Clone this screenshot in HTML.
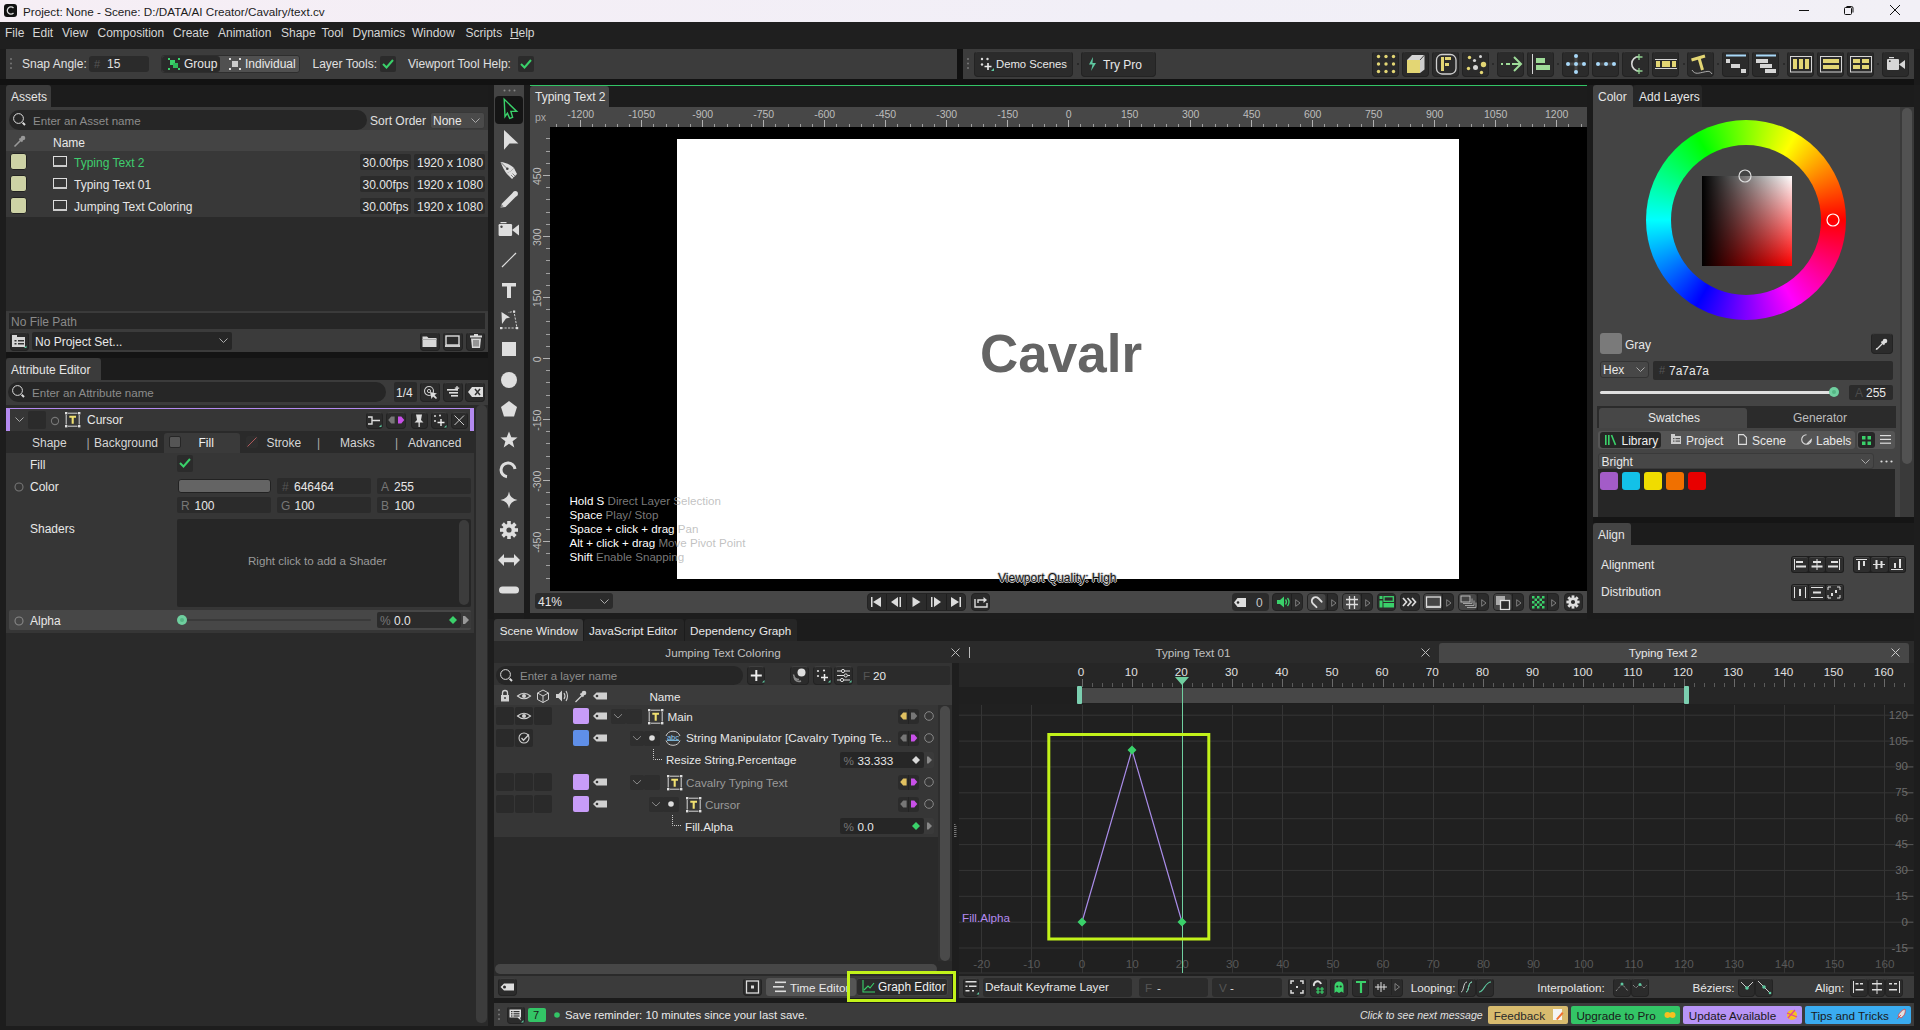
<!DOCTYPE html>
<html><head><meta charset="utf-8">
<style>
*{box-sizing:border-box;margin:0;padding:0}
html,body{width:1920px;height:1030px;overflow:hidden;background:#1d1d1d;font-family:"Liberation Sans",sans-serif;font-size:12px;color:#dcdcdc}
.a{position:absolute}
.t{position:absolute;white-space:nowrap;line-height:1}
svg{position:absolute;overflow:visible}
.btn{background:#2b2b2b;border:1px solid #232323;border-top-color:#3f3f3f;border-radius:4px}
</style></head><body>
<!-- ===== TITLE BAR ===== -->
<div class="a" style="left:0;top:0;width:1920px;height:22px;background:linear-gradient(90deg,#f6eef5,#f1eff7 60%,#f2f0f6)"></div>
<div class="a" style="left:4px;top:4px;width:13px;height:13px;background:#111;border-radius:3px"></div>
<svg style="left:4px;top:4px" width="13" height="13"><path d="M9.5 4 A3.6 3.6 0 1 0 9.5 9" fill="none" stroke="#ddd" stroke-width="1.3"/></svg>
<div class="t" style="left:23px;top:6px;color:#1b1b1b;font-size:11.7px">Project: None - Scene: D:/DATA/AI Creator/Cavalry/text.cv</div>
<svg style="left:1799px;top:10px" width="10" height="1"><rect width="10" height="1" fill="#111"/></svg>
<svg style="left:1844px;top:5px" width="10" height="10"><rect x="0.5" y="2.5" width="7" height="7" rx="1" fill="none" stroke="#111"/><path d="M2.5 1.5 H7.5 a1.5 1.5 0 0 1 1.5 1.5 V7.5" fill="none" stroke="#111"/></svg>
<svg style="left:1890px;top:5px" width="10" height="10"><path d="M0 0 L10 10 M10 0 L0 10" stroke="#111" stroke-width="1"/></svg>

<!-- ===== MENU BAR ===== -->
<div class="a" style="left:0;top:22px;width:1920px;height:27px;background:#1f1f1f"></div>
<div class="t" style="left:5px;top:26.5px;color:#d6d6d6">File</div>
<div class="t" style="left:32.5px;top:26.5px;color:#d6d6d6">Edit</div>
<div class="t" style="left:62px;top:26.5px;color:#d6d6d6">View</div>
<div class="t" style="left:97.5px;top:26.5px;color:#d6d6d6">Composition</div>
<div class="t" style="left:173px;top:26.5px;color:#d6d6d6">Create</div>
<div class="t" style="left:218px;top:26.5px;color:#d6d6d6">Animation</div>
<div class="t" style="left:281px;top:26.5px;color:#d6d6d6">Shape</div>
<div class="t" style="left:321.5px;top:26.5px;color:#d6d6d6">Tool</div>
<div class="t" style="left:352.5px;top:26.5px;color:#d6d6d6">Dynamics</div>
<div class="t" style="left:412px;top:26.5px;color:#d6d6d6">Window</div>
<div class="t" style="left:465.5px;top:26.5px;color:#d6d6d6">Scripts</div>
<div class="t" style="left:510px;top:26.5px;color:#d6d6d6;text-decoration:underline">H</div>
<div class="t" style="left:518.5px;top:26.5px;color:#d6d6d6">elp</div>

<!-- ===== TOOLBAR ===== -->
<div class="a" style="left:0;top:49px;width:1920px;height:36px;background:#1b1b1b"></div>
<div class="a" style="left:6px;top:49px;width:951px;height:30px;background:#3c3c3c"></div>
<div class="a" style="left:963px;top:49px;width:951px;height:30px;background:#3c3c3c"></div>
<div class="a" style="left:0;top:79px;width:1914px;height:6px;background:#121212"></div>
<div class="a" style="left:957px;top:49px;width:6px;height:30px;background:#111"></div>
<svg style="left:10px;top:58px" width="3" height="12"><circle cx="1" cy="1" r="1" fill="#777"/><circle cx="1" cy="5.5" r="1" fill="#777"/><circle cx="1" cy="10" r="1" fill="#777"/></svg>
<div class="t" style="left:22px;top:58px;color:#e0e0e0">Snap Angle:</div>
<div class="a" style="left:89px;top:56px;width:60px;height:16px;background:#2b2b2b;border-radius:3px"></div>
<div class="t" style="left:94px;top:58.5px;color:#555;font-size:11px">#</div>
<div class="t" style="left:107px;top:58px;color:#e0e0e0">15</div>
<div class="a" style="left:161px;top:55px;width:139px;height:18px;background:#505050;border-radius:3px;border:1px solid #2e2e2e"></div>
<div class="a" style="left:162px;top:56px;width:58px;height:16px;background:#2a2a2a;border-radius:3px"></div>
<svg style="left:168px;top:58px" width="12" height="12"><rect x="0" y="0" width="2" height="2" fill="#3ad16a"/><rect x="10" y="0" width="2" height="2" fill="#3ad16a"/><rect x="0" y="10" width="2" height="2" fill="#3ad16a"/><rect x="10" y="10" width="2" height="2" fill="#3ad16a"/><rect x="2" y="2" width="5" height="5" fill="#3ad16a"/><rect x="5" y="5" width="5" height="5" fill="#2fb85a"/></svg>
<div class="t" style="left:184px;top:58px;color:#e8e8e8">Group</div>
<svg style="left:229px;top:58px" width="12" height="12"><rect x="0" y="0" width="2" height="2" fill="#ddd"/><rect x="10" y="0" width="2" height="2" fill="#ddd"/><rect x="0" y="10" width="2" height="2" fill="#ddd"/><rect x="10" y="10" width="2" height="2" fill="#ddd"/><rect x="3" y="3" width="6" height="6" fill="#ccc"/></svg>
<div class="t" style="left:245px;top:58px;color:#e8e8e8">Individual</div>
<div class="t" style="left:312.5px;top:58px;color:#e0e0e0">Layer Tools:</div>
<div class="a" style="left:380px;top:56px;width:16px;height:16px;background:#2b2b2b;border-radius:2px"></div>
<svg style="left:382px;top:59px" width="12" height="10"><path d="M1 5 L4.5 8.5 L11 1" fill="none" stroke="#3ad16a" stroke-width="2"/></svg>
<div class="t" style="left:408px;top:58px;color:#e0e0e0">Viewport Tool Help:</div>
<div class="a" style="left:518px;top:56px;width:16px;height:16px;background:#2b2b2b;border-radius:2px"></div>
<svg style="left:520px;top:59px" width="12" height="10"><path d="M1 5 L4.5 8.5 L11 1" fill="none" stroke="#3ad16a" stroke-width="2"/></svg>

<svg style="left:967px;top:58px" width="3" height="12"><circle cx="1" cy="1" r="1" fill="#777"/><circle cx="1" cy="5.5" r="1" fill="#777"/><circle cx="1" cy="10" r="1" fill="#777"/></svg>
<div class="a btn" style="left:974px;top:51px;width:99px;height:26px"></div>
<svg style="left:980px;top:57px" width="14" height="14"><circle cx="2" cy="2" r="1.2" fill="#ddd"/><circle cx="7.5" cy="2" r="1.2" fill="#ddd"/><circle cx="2" cy="7.5" r="1.2" fill="#ddd"/><path d="M8 6 V13 M4.5 9.5 H11.5" stroke="#eee" stroke-width="1.6"/><path d="M11 14 L14 11 V14Z" fill="#5ec8a0"/></svg>
<div class="t" style="left:996px;top:59px;color:#e8e8e8;font-size:11.3px">Demo Scenes</div>
<svg style="left:1077px;top:63px" width="2" height="2"><circle cx="1" cy="1" r="1" fill="#222"/></svg>
<div class="a btn" style="left:1081px;top:51px;width:75px;height:26px"></div>
<svg style="left:1088px;top:57px" width="9" height="14"><path d="M5 0 L1 7.5 H4.5 L3 14 L8 6 H4.5 Z" fill="#5ec8a0"/></svg>
<div class="t" style="left:1103px;top:59px;color:#e8e8e8">Try Pro</div>
<div class="a btn" style="left:1372.0px;top:51px;width:27px;height:26px"></div><svg style="left:1372.0px;top:51px" width="27" height="26" viewBox="1372.0 51 27 26"><circle cx="1378.5" cy="56.5" r="1.7" fill="#e3d674"/><circle cx="1378.5" cy="64" r="1.7" fill="#e3d674"/><circle cx="1378.5" cy="71.5" r="1.7" fill="#e3d674"/><circle cx="1386" cy="56.5" r="1.7" fill="#e3d674"/><circle cx="1386" cy="64" r="1.7" fill="#e3d674"/><circle cx="1386" cy="71.5" r="1.7" fill="#e3d674"/><circle cx="1393.5" cy="56.5" r="1.7" fill="#e3d674"/><circle cx="1393.5" cy="64" r="1.7" fill="#e3d674"/><circle cx="1393.5" cy="71.5" r="1.7" fill="#e3d674"/></svg>
<div class="a btn" style="left:1402.0px;top:51px;width:27px;height:26px"></div><svg style="left:1402.0px;top:51px" width="27" height="26" viewBox="1402.0 51 27 26"><rect x="1407" y="60" width="13" height="13" fill="#e3d674"/><path d="M1407 60 L1412 55 H1424.5 L1420 60Z" fill="#d6d6d6"/><path d="M1420 60 L1424.5 55 V69.5 L1420 73Z" fill="#cfcfcf"/><path d="M1420 60 L1424.5 55" stroke="#333" stroke-width="0.8"/></svg>
<div class="a btn" style="left:1432.0px;top:51px;width:27px;height:26px"></div><svg style="left:1432.0px;top:51px" width="27" height="26" viewBox="1432.0 51 27 26"><rect x="1436.5" y="54.5" width="19.5" height="19.5" rx="5.5" fill="none" stroke="#cfcfcf" stroke-width="1.3"/><rect x="1441" y="57" width="3" height="14" fill="#e3d674"/><rect x="1445" y="57" width="6" height="3" fill="#e3d674"/><rect x="1445" y="63" width="4" height="3" fill="#e3d674"/></svg>
<div class="a btn" style="left:1462.0px;top:51px;width:27px;height:26px"></div><svg style="left:1462.0px;top:51px" width="27" height="26" viewBox="1462.0 51 27 26"><circle cx="1469.5" cy="57.5" r="1.7" fill="#e3d674"/><circle cx="1480.5" cy="56.5" r="1.5" fill="#d6d6d6"/><circle cx="1474.5" cy="60.5" r="1.6" fill="#d6d6d6"/><circle cx="1483.5" cy="64.5" r="2.7" fill="#e3d674"/><circle cx="1475.5" cy="67.5" r="2.5" fill="#d6d6d6"/><circle cx="1468.5" cy="68.5" r="1.7" fill="#e3d674"/><circle cx="1481.5" cy="72.5" r="1.7" fill="#e3d674"/></svg>
<div class="a btn" style="left:1497.0px;top:51px;width:27px;height:26px"></div><svg style="left:1497.0px;top:51px" width="27" height="26" viewBox="1497.0 51 27 26"><rect x="1501" y="63" width="2" height="2" fill="#9edb98"/><rect x="1506" y="63" width="4" height="2" fill="#9edb98"/><rect x="1512" y="63" width="9" height="2" fill="#9edb98"/><path d="M1514 57 L1521 64 L1514 71" fill="none" stroke="#9edb98" stroke-width="2"/></svg>
<div class="a btn" style="left:1527.0px;top:51px;width:27px;height:26px"></div><svg style="left:1527.0px;top:51px" width="27" height="26" viewBox="1527.0 51 27 26"><rect x="1532" y="54" width="1" height="20" fill="#d6d6d6"/><rect x="1536" y="58" width="9" height="5" fill="#9edb98"/><rect x="1536" y="65" width="14" height="5" fill="#9edb98"/></svg>
<div class="a btn" style="left:1562.0px;top:51px;width:27px;height:26px"></div><svg style="left:1562.0px;top:51px" width="27" height="26" viewBox="1562.0 51 27 26"><path d="M1576 56 V72 M1568 64 H1584" stroke="#4a4a4a" stroke-width="3"/><circle cx="1576" cy="56" r="2" fill="#a8d8f8"/><circle cx="1568" cy="64" r="2" fill="#a8d8f8"/><circle cx="1576" cy="64" r="2" fill="#a8d8f8"/><circle cx="1584" cy="64" r="2" fill="#a8d8f8"/><circle cx="1576" cy="72" r="2" fill="#a8d8f8"/></svg>
<div class="a btn" style="left:1592.0px;top:51px;width:27px;height:26px"></div><svg style="left:1592.0px;top:51px" width="27" height="26" viewBox="1592.0 51 27 26"><path d="M1598 64 H1614" stroke="#4a4a4a" stroke-width="3"/><circle cx="1598" cy="64" r="2" fill="#a8d8f8"/><circle cx="1606" cy="64" r="2" fill="#a8d8f8"/><circle cx="1614" cy="64" r="2" fill="#a8d8f8"/></svg>
<div class="a btn" style="left:1622.0px;top:51px;width:27px;height:26px"></div><svg style="left:1622.0px;top:51px" width="27" height="26" viewBox="1622.0 51 27 26"><path d="M1639 56.5 A7.2 7.2 0 0 0 1639 71" fill="none" stroke="#d6d6d6" stroke-width="1.6"/><path d="M1639 54 V60 M1636.5 57 H1642.5 M1639 68 V74 M1636.5 71 H1642.5" stroke="#8fcf8f" stroke-width="1.3"/></svg>
<div class="a btn" style="left:1652.0px;top:51px;width:27px;height:26px"></div><svg style="left:1652.0px;top:51px" width="27" height="26" viewBox="1652.0 51 27 26"><rect x="1655" y="59" width="22" height="1" fill="#d6d6d6"/><rect x="1655" y="68" width="22" height="1" fill="#d6d6d6"/><rect x="1656" y="61" width="4" height="6" fill="#e3d674"/><rect x="1662" y="61" width="8" height="6" fill="#e3d674"/><rect x="1672" y="61" width="4" height="6" fill="#e3d674"/></svg>
<div class="a btn" style="left:1687.0px;top:51px;width:27px;height:26px"></div><svg style="left:1687.0px;top:51px" width="27" height="26" viewBox="1687.0 51 27 26"><path d="M1691.5 60 L1705 56" stroke="#e3d674" stroke-width="3"/><path d="M1699 58 L1702.5 70" stroke="#e3d674" stroke-width="3"/><path d="M1692 70 C1695 75 1699 73 1704 72 S1710 71 1712 74" fill="none" stroke="#bbb" stroke-width="0.9"/></svg>
<div class="a btn" style="left:1722.0px;top:51px;width:27px;height:26px"></div><svg style="left:1722.0px;top:51px" width="27" height="26" viewBox="1722.0 51 27 26"><rect x="1726" y="54.5" width="20" height="2" fill="#a8d8f8"/><rect x="1726" y="59" width="4" height="4" fill="#d6d6d6"/><rect x="1731" y="64" width="9" height="4" fill="#d6d6d6"/><rect x="1741" y="69" width="5" height="4" fill="#d6d6d6"/></svg>
<div class="a btn" style="left:1752.0px;top:51px;width:27px;height:26px"></div><svg style="left:1752.0px;top:51px" width="27" height="26" viewBox="1752.0 51 27 26"><rect x="1756" y="54.5" width="20" height="2" fill="#a8d8f8"/><rect x="1756" y="59" width="12" height="4" fill="#d6d6d6"/><rect x="1760" y="64" width="12" height="4" fill="#d6d6d6"/><rect x="1765" y="69" width="11" height="4" fill="#d6d6d6"/></svg>
<div class="a btn" style="left:1787.0px;top:51px;width:27px;height:26px"></div><svg style="left:1787.0px;top:51px" width="27" height="26" viewBox="1787.0 51 27 26"><rect x="1790.5" y="56.5" width="21" height="15.5" fill="none" stroke="#d6d6d6" stroke-width="1"/><rect x="1793" y="59" width="4" height="10" fill="#e3d674"/><rect x="1799" y="59" width="4" height="10" fill="#e3d674"/><rect x="1805" y="59" width="4" height="10" fill="#e3d674"/></svg>
<div class="a btn" style="left:1817.0px;top:51px;width:27px;height:26px"></div><svg style="left:1817.0px;top:51px" width="27" height="26" viewBox="1817.0 51 27 26"><rect x="1820.5" y="56.5" width="21" height="15.5" fill="none" stroke="#d6d6d6" stroke-width="1"/><rect x="1823" y="59" width="16" height="4" fill="#e3d674"/><rect x="1823" y="65" width="16" height="4" fill="#e3d674"/></svg>
<div class="a btn" style="left:1847.0px;top:51px;width:27px;height:26px"></div><svg style="left:1847.0px;top:51px" width="27" height="26" viewBox="1847.0 51 27 26"><rect x="1850.5" y="56.5" width="21" height="15.5" fill="none" stroke="#d6d6d6" stroke-width="1"/><rect x="1853" y="59" width="7" height="4" fill="#e3d674"/><rect x="1862" y="59" width="7" height="4" fill="#e3d674"/><rect x="1853" y="65" width="7" height="4" fill="#e3d674"/><rect x="1862" y="65" width="7" height="4" fill="#e3d674"/></svg>
<div class="a btn" style="left:1882.0px;top:51px;width:27px;height:26px"></div><svg style="left:1882.0px;top:51px" width="27" height="26" viewBox="1882.0 51 27 26"><rect x="1887" y="59" width="12" height="11" rx="1" fill="#d6d6d6"/><path d="M1899 64.5 L1905 60 V69Z" fill="#d6d6d6"/><rect x="1889" y="57" width="5" height="1.2" fill="#d6d6d6"/><circle cx="1889.8" cy="61.2" r="0.9" fill="#333"/></svg><svg style="left:1492px;top:63px" width="2" height="2"><circle cx="1" cy="1" r="1" fill="#252525"/></svg><svg style="left:1557px;top:63px" width="2" height="2"><circle cx="1" cy="1" r="1" fill="#252525"/></svg><svg style="left:1682.5px;top:63px" width="2" height="2"><circle cx="1" cy="1" r="1" fill="#252525"/></svg><svg style="left:1717px;top:63px" width="2" height="2"><circle cx="1" cy="1" r="1" fill="#252525"/></svg><svg style="left:1782.5px;top:63px" width="2" height="2"><circle cx="1" cy="1" r="1" fill="#252525"/></svg><svg style="left:1877px;top:63px" width="2" height="2"><circle cx="1" cy="1" r="1" fill="#252525"/></svg><!-- ===== LEFT PANEL: ASSETS ===== -->
<div class="a" style="left:0;top:85px;width:6px;height:945px;background:#1d1d1d"></div>
<div class="a" style="left:6px;top:85px;width:482px;height:22px;background:#1c1c1c"></div>
<div class="a" style="left:6px;top:85px;width:45px;height:22px;background:#3b3b3b;border-radius:3px 3px 0 0"></div>
<div class="t" style="left:11px;top:91px;color:#e6e6e6">Assets</div>
<div class="a" style="left:6px;top:107px;width:482px;height:44px;background:#3b3b3b"></div>
<div class="a" style="left:6px;top:130px;width:482px;height:21px;background:#444"></div>
<div class="a" style="left:9px;top:110px;width:358px;height:20px;background:#262626;border-radius:10px"></div>
<svg style="left:13px;top:113px" width="14" height="14"><circle cx="5.5" cy="5.5" r="4.9" fill="none" stroke="#ddd" stroke-width="1"/><path d="M9.6 9.6 L12 12" stroke="#ddd" stroke-width="2"/></svg>
<div class="t" style="left:33px;top:115px;color:#8c8c8c;font-size:11.6px">Enter an Asset name</div>
<div class="t" style="left:370px;top:115px;color:#e0e0e0">Sort Order</div>
<div class="a" style="left:430px;top:111.5px;width:55px;height:17px;background:#4a4a4a;border:1px solid #383838;border-radius:3px"></div>
<div class="t" style="left:433px;top:115px;color:#e8e8e8">None</div>
<svg style="left:471px;top:118px" width="9" height="5"><path d="M0.5 0.5 L4.5 4.5 L8.5 0.5" fill="none" stroke="#aaa" stroke-width="1"/></svg>
<svg style="left:13px;top:134px" width="14" height="14"><path d="M1.5 12.5 L8 6" stroke="#999" stroke-width="1.6" fill="none"/><path d="M6.5 4.5 L9.5 7.5" stroke="#999" stroke-width="1.8"/><circle cx="10" cy="4" r="2.3" fill="#999"/><path d="M8 6 L10 4" stroke="#999" stroke-width="2.5"/></svg>
<div class="t" style="left:53px;top:137px;color:#e8e8e8">Name</div>
<div class="a" style="left:6px;top:151px;width:482px;height:66px;background:#383838"></div>
<div class="a" style="left:6px;top:217px;width:482px;height:95px;background:#2a2a2a"></div>

<div class="a" style="left:9.5px;top:153px;width:17px;height:17px;background:#cdd2a5;border-radius:3px;border:1px solid #222"></div>
<div class="a" style="left:9.5px;top:175px;width:17px;height:17px;background:#cdd2a5;border-radius:3px;border:1px solid #222"></div>
<div class="a" style="left:9.5px;top:197px;width:17px;height:17px;background:#cdd2a5;border-radius:3px;border:1px solid #222"></div>
<svg style="left:53px;top:156px" width="15" height="12"><rect x="0.5" y="0.5" width="13" height="9" fill="none" stroke="#ddd"/><rect x="0" y="9" width="14" height="2" fill="#ccc"/></svg>
<svg style="left:53px;top:178px" width="15" height="12"><rect x="0.5" y="0.5" width="13" height="9" fill="none" stroke="#ddd"/><rect x="0" y="9" width="14" height="2" fill="#ccc"/></svg>
<svg style="left:53px;top:200px" width="15" height="12"><rect x="0.5" y="0.5" width="13" height="9" fill="none" stroke="#ddd"/><rect x="0" y="9" width="14" height="2" fill="#ccc"/></svg>
<div class="t" style="left:74px;top:157px;color:#3fce6e">Typing Text 2</div>
<div class="t" style="left:74px;top:179px;color:#e6e6e6">Typing Text 01</div>
<div class="t" style="left:74px;top:201px;color:#e6e6e6">Jumping Text Coloring</div>
<div class="a" style="left:360px;top:154px;width:51px;height:16px;background:#2b2b2b;border-radius:2px"></div>
<div class="a" style="left:414px;top:154px;width:71px;height:16px;background:#2b2b2b;border-radius:2px"></div>
<div class="a" style="left:360px;top:176px;width:51px;height:16px;background:#2b2b2b;border-radius:2px"></div>
<div class="a" style="left:414px;top:176px;width:71px;height:16px;background:#2b2b2b;border-radius:2px"></div>
<div class="a" style="left:360px;top:198px;width:51px;height:16px;background:#2b2b2b;border-radius:2px"></div>
<div class="a" style="left:414px;top:198px;width:71px;height:16px;background:#2b2b2b;border-radius:2px"></div>
<div class="t" style="left:362.5px;top:157px;color:#e6e6e6">30.00fps</div>
<div class="t" style="left:417px;top:157px;color:#e6e6e6">1920 x 1080</div>
<div class="t" style="left:362.5px;top:179px;color:#e6e6e6">30.00fps</div>
<div class="t" style="left:417px;top:179px;color:#e6e6e6">1920 x 1080</div>
<div class="t" style="left:362.5px;top:201px;color:#e6e6e6">30.00fps</div>
<div class="t" style="left:417px;top:201px;color:#e6e6e6">1920 x 1080</div>

<!-- file path / project -->
<div class="a" style="left:6px;top:311px;width:482px;height:1px;background:#3a3a3a"></div>
<div class="a" style="left:6px;top:312px;width:482px;height:40px;background:#3b3b3b"></div>
<div class="a" style="left:9px;top:312.5px;width:476px;height:16.5px;background:#262626"></div>
<div class="t" style="left:11px;top:315.5px;color:#8a8a8a">No File Path</div>
<div class="a btn" style="left:9.5px;top:332px;width:19px;height:19px"></div>
<svg style="left:12px;top:335px" width="15" height="14"><rect x="0" y="2" width="13" height="10" fill="#d6d6d6"/><rect x="0" y="0" width="5" height="2" fill="#d6d6d6"/><rect x="2.5" y="5" width="2" height="1.5" fill="#333"/><rect x="6" y="5" width="6" height="1.5" fill="#333"/><rect x="2.5" y="8" width="2" height="1.5" fill="#333"/><rect x="6" y="8" width="6" height="1.5" fill="#333"/><path d="M12 13 L14.5 10.5 V13Z" fill="#5ec8a0"/></svg>
<div class="a" style="left:32px;top:332px;width:200px;height:18px;background:#262626;border-radius:2px"></div>
<div class="t" style="left:35px;top:335.5px;color:#e8e8e8">No Project Set...</div>
<svg style="left:219px;top:338px" width="9" height="5"><path d="M0.5 0.5 L4.5 4.5 L8.5 0.5" fill="none" stroke="#aaa" stroke-width="1"/></svg>
<div class="a btn" style="left:420px;top:332px;width:20px;height:19px"></div>
<div class="a btn" style="left:443px;top:332px;width:20px;height:19px"></div>
<div class="a btn" style="left:466px;top:332px;width:19px;height:19px"></div>
<svg style="left:422px;top:335px" width="16" height="13"><path d="M0.5 1.5 H5 L6.5 3 H14.5 V12 H0.5Z" fill="#d8d8d8"/><rect x="0.5" y="4" width="14" height="1" fill="#aaa"/></svg>
<svg style="left:445px;top:335px" width="16" height="13"><rect x="1" y="1" width="13" height="9" fill="none" stroke="#ddd" stroke-width="1.4"/><rect x="0" y="10" width="15" height="2" fill="#ccc"/></svg>
<svg style="left:469px;top:334px" width="14" height="15"><rect x="1" y="1.5" width="12" height="2" fill="#d8d8d8"/><rect x="5" y="0" width="4" height="2" fill="#d8d8d8"/><path d="M2 4.5 H12 L11 14 H3Z" fill="#d8d8d8"/><path d="M5 6 V12.5 M7 6 V12.5 M9 6 V12.5" stroke="#444" stroke-width="0.9"/></svg>
<div class="a" style="left:6px;top:352px;width:482px;height:6px;background:#141414"></div>

<!-- ===== ATTRIBUTE EDITOR ===== -->
<div class="a" style="left:6px;top:358px;width:482px;height:22px;background:#1c1c1c"></div>
<div class="a" style="left:6px;top:358px;width:95px;height:22px;background:#3b3b3b;border-radius:3px 3px 0 0"></div>
<div class="t" style="left:11px;top:364px;color:#e6e6e6">Attribute Editor</div>
<div class="a" style="left:6px;top:380px;width:482px;height:28px;background:#3b3b3b"></div>
<div class="a" style="left:8px;top:382px;width:378px;height:20px;background:#262626;border-radius:10px"></div>
<svg style="left:12px;top:385px" width="14" height="14"><circle cx="5.5" cy="5.5" r="4.9" fill="none" stroke="#ddd" stroke-width="1"/><path d="M9.6 9.6 L12 12" stroke="#ddd" stroke-width="2"/></svg>
<div class="t" style="left:32px;top:387px;color:#8c8c8c;font-size:11.6px">Enter an Attribute name</div>
<div class="a" style="left:394px;top:382px;width:23px;height:20px;background:#2a2a2a;border-radius:2px"></div>
<div class="t" style="left:396px;top:387px;color:#e6e6e6">1/4</div>
<div class="a btn" style="left:420px;top:382px;width:20px;height:20px"></div>
<div class="a btn" style="left:443px;top:382px;width:20px;height:20px"></div>
<div class="a btn" style="left:465px;top:382px;width:20px;height:20px"></div>
<svg style="left:423px;top:385px" width="15" height="15"><circle cx="6" cy="6" r="4.5" fill="none" stroke="#ccc" stroke-width="1.1"/><circle cx="6" cy="6" r="1.6" fill="none" stroke="#ccc"/><path d="M7 7 L8.5 14 L10 11.5 L13 14 L14 13 L11.5 10 L14 8.5Z" fill="#ddd"/></svg>
<svg style="left:446px;top:386px" width="15" height="13"><rect x="1" y="3" width="11" height="1.6" fill="#ddd"/><rect x="3" y="6" width="9" height="1.6" fill="#ddd"/><rect x="5" y="9" width="7" height="1.6" fill="#ddd"/><path d="M11 0 V4.5 M8.8 2.2 H13.2" stroke="#ddd" stroke-width="1.2"/></svg>
<svg style="left:468px;top:387px" width="15" height="10"><path d="M4 0 H15 V10 H4 L0 5Z" fill="#ddd"/><path d="M7 2 L12 8 M12 2 L7 8" stroke="#333" stroke-width="1.5"/></svg>

<div class="a" style="left:6px;top:405px;width:482px;height:620.5px;background:#2a2a2a"></div>
<div class="a" style="left:6px;top:408px;width:468px;height:23px;background:#363636;border-top:1px solid #b48af0"></div>
<div class="a" style="left:6px;top:408px;width:4px;height:23px;background:#b48af0"></div>
<div class="a" style="left:470px;top:408px;width:4px;height:23px;background:#b48af0"></div>
<svg style="left:15px;top:417px" width="9" height="5"><path d="M0.5 0.5 L4.5 4.5 L8.5 0.5" fill="none" stroke="#aaa" stroke-width="1"/></svg>
<div class="a" style="left:28px;top:411px;width:18px;height:18px;background:#2b2b2b;border-radius:2px"></div>
<svg style="left:50px;top:415.5px" width="10" height="10"><circle cx="5" cy="5" r="3.6" fill="none" stroke="#777" stroke-width="1.1"/></svg>
<svg style="left:65px;top:412px" width="17" height="17"><rect x="0" y="0" width="2.4" height="2.4" fill="#e0e0e0"/><rect x="13" y="0" width="2.4" height="2.4" fill="#e0e0e0"/><rect x="0" y="13" width="2.4" height="2.4" fill="#e0e0e0"/><rect x="13" y="13" width="2.4" height="2.4" fill="#e0e0e0"/><path d="M3 1.2 H12.5 M3 14.2 H12.5 M1.2 3 V12.5 M14.2 3 V12.5" stroke="#d8d8d8" stroke-width="1"/><path d="M4.3 4.8 H11 M7.7 4.8 V11.8" stroke="#f0e070" stroke-width="2.1"/></svg>
<div class="t" style="left:87px;top:414px;color:#e8e8e8">Cursor</div>
<div class="a btn" style="left:365.5px;top:412px;width:17px;height:16.5px"></div>
<svg style="left:367px;top:415px" width="15" height="12"><path d="M1 2 H5 V9 H1 M5 5.5 H13" fill="none" stroke="#ddd" stroke-width="1.4"/><path d="M12 12 L14.5 9.5 V12Z" fill="#5ec8a0"/></svg>
<div class="a btn" style="left:386px;top:412px;width:20px;height:16.5px"></div>
<svg style="left:386px;top:420px" width="1" height="1"><path d="M2.2 0 L5.2 -3.6 H8.6 V3.6 H5.2Z" fill="#777"/><path d="M12 -3.6 H15.3 L18.3 0 L15.3 3.6 H12Z" fill="#c850e8"/></svg>
<div class="a btn" style="left:410.5px;top:412px;width:17px;height:16.5px"></div>
<svg style="left:413px;top:414px" width="12" height="14"><path d="M3 0.5 H9 L8 6 L10.5 8.5 H1.5 L4 6Z" fill="#ddd"/><rect x="5.5" y="8" width="1.3" height="5" fill="#ddd"/></svg>
<div class="a btn" style="left:431px;top:412px;width:17px;height:16.5px"></div>
<svg style="left:433px;top:414px" width="14" height="14"><circle cx="2" cy="2" r="1" fill="#ddd"/><circle cx="7" cy="1.5" r="1" fill="#ddd"/><circle cx="2" cy="7" r="1" fill="#ddd"/><path d="M8 5 V12 M4.5 8.5 H11.5" stroke="#eee" stroke-width="1.4"/><path d="M11 13.5 L13.5 11 V13.5Z" fill="#5ec8a0"/></svg>
<div class="a btn" style="left:451px;top:412px;width:16.5px;height:16.5px"></div>
<svg style="left:454px;top:415px" width="11" height="11"><path d="M0.5 0.5 L10 10 M10 0.5 L0.5 10" stroke="#ccc" stroke-width="1"/></svg>

<!-- tabs -->
<div class="a" style="left:6px;top:431px;width:468px;height:22px;background:#2a2a2a"></div>
<div class="a" style="left:164px;top:433px;width:76px;height:20px;background:#3a3a3a;border-radius:3px 3px 0 0"></div>
<div class="t" style="left:32px;top:437px;color:#d6d6d6">Shape</div>
<div class="t" style="left:86.5px;top:437px;color:#aaa">|</div>
<div class="t" style="left:94px;top:437px;color:#d6d6d6">Background</div>
<div class="a" style="left:169px;top:436px;width:12px;height:12px;background:#555;border:1px solid #262626;border-radius:2px"></div>
<div class="t" style="left:198.5px;top:437px;color:#f0f0f0">Fill</div>
<svg style="left:246px;top:436px" width="12" height="12"><rect x="0" y="0" width="12" height="12" fill="#2e2e2e" rx="2"/><path d="M1.5 10.5 L10.5 1.5" stroke="#b0585a" stroke-width="1"/></svg>
<div class="t" style="left:266.5px;top:437px;color:#d6d6d6">Stroke</div>
<div class="t" style="left:317px;top:437px;color:#aaa">|</div>
<div class="t" style="left:340px;top:437px;color:#d6d6d6">Masks</div>
<div class="t" style="left:395px;top:437px;color:#aaa">|</div>
<div class="t" style="left:408px;top:437px;color:#d6d6d6">Advanced</div>

<div class="a" style="left:6px;top:453px;width:468px;height:180px;background:#363636"></div>
<div class="a" style="left:476px;top:405px;width:10.5px;height:617.5px;background:#3c3c3c;border-radius:5px"></div>
<div class="t" style="left:30px;top:459px;color:#e8e8e8">Fill</div>
<div class="a" style="left:177px;top:455px;width:16px;height:17px;background:#2b2b2b;border-radius:2px"></div>
<svg style="left:179px;top:458px" width="12" height="10"><path d="M1 5 L4.5 8.5 L11 1" fill="none" stroke="#3ad16a" stroke-width="2"/></svg>
<svg style="left:14px;top:481.5px" width="10" height="10"><circle cx="5" cy="5" r="4" fill="none" stroke="#777" stroke-width="1.1"/></svg>
<div class="t" style="left:30px;top:481px;color:#e8e8e8">Color</div>
<div class="a" style="left:177.5px;top:479px;width:93px;height:14px;background:#646464;border:1px solid #222;border-radius:3px"></div>
<div class="a" style="left:277px;top:478px;width:94px;height:16px;background:#2b2b2b;border-radius:2px"></div>
<div class="a" style="left:377px;top:478px;width:94px;height:16px;background:#2b2b2b;border-radius:2px"></div>
<div class="a" style="left:177px;top:497px;width:94px;height:16px;background:#2b2b2b;border-radius:2px"></div>
<div class="a" style="left:277px;top:497px;width:94px;height:16px;background:#2b2b2b;border-radius:2px"></div>
<div class="a" style="left:377px;top:497px;width:94px;height:16px;background:#2b2b2b;border-radius:2px"></div>
<div class="t" style="left:282px;top:481px;color:#555">#</div>
<div class="t" style="left:294px;top:481px;color:#e8e8e8">646464</div>
<div class="t" style="left:381px;top:481px;color:#777">A</div>
<div class="t" style="left:394px;top:481px;color:#e8e8e8">255</div>
<div class="t" style="left:181px;top:500px;color:#777">R</div>
<div class="t" style="left:194.5px;top:500px;color:#e8e8e8">100</div>
<div class="t" style="left:281px;top:500px;color:#777">G</div>
<div class="t" style="left:294.5px;top:500px;color:#e8e8e8">100</div>
<div class="t" style="left:381px;top:500px;color:#777">B</div>
<div class="t" style="left:394.5px;top:500px;color:#e8e8e8">100</div>
<div class="t" style="left:30px;top:522.5px;color:#e8e8e8">Shaders</div>
<div class="a" style="left:177px;top:519px;width:294px;height:88px;background:#262626;border-radius:2px"></div>
<div class="a" style="left:459px;top:520px;width:10px;height:85px;background:#3c3c3c;border-radius:5px"></div>
<div class="t" style="left:248px;top:555px;color:#9a9a9a;font-size:11.6px">Right click to add a Shader</div>
<div class="a" style="left:9px;top:610px;width:462px;height:20px;background:#474747;border-radius:2px"></div>
<svg style="left:14px;top:615.5px" width="10" height="10"><circle cx="5" cy="5" r="4" fill="none" stroke="#888" stroke-width="1.1"/></svg>
<div class="t" style="left:30px;top:615px;color:#e8e8e8">Alpha</div>
<div class="a" style="left:180px;top:619px;width:191px;height:2px;background:#3a3a3a;border-radius:1px"></div>
<svg style="left:176px;top:614px" width="12" height="12"><circle cx="6" cy="6" r="5" fill="#6fcf9f"/><circle cx="6" cy="6" r="2" fill="#55b585"/></svg>
<div class="a" style="left:377px;top:612px;width:84px;height:16px;background:#2b2b2b;border-radius:2px"></div>
<div class="a" style="left:461px;top:612px;width:10px;height:16px;background:#3a3a3a"></div>
<div class="t" style="left:380px;top:615px;color:#777">%</div>
<div class="t" style="left:394px;top:615px;color:#e8e8e8">0.0</div>
<svg style="left:449px;top:616px" width="8" height="8"><path d="M4 0 L8 4 L4 8 L0 4Z" fill="#3ad16a"/></svg>
<svg style="left:463px;top:616px" width="6" height="8"><path d="M0 0 H2 L6 4 L2 8 H0Z" fill="#999"/></svg>
<div class="a" style="left:6px;top:633px;width:470px;height:392.5px;background:#2a2a2a"></div>
<div class="a" style="left:488px;top:85px;width:6px;height:534px;background:#1b1b1b"></div>
<div class="a" style="left:524px;top:85px;width:6px;height:534px;background:#1b1b1b"></div>
<div class="a" style="left:494px;top:85px;width:30px;height:528px;background:#444"></div>
<svg style="left:503px;top:89px" width="14" height="3"><circle cx="1.5" cy="1.5" r="1" fill="#888"/><circle cx="6.5" cy="1.5" r="1" fill="#888"/><circle cx="11.5" cy="1.5" r="1" fill="#888"/></svg>
<div class="a" style="left:495px;top:96px;width:28px;height:28px;background:#151515;border-radius:4px"></div>
<svg style="left:509px;top:110px" width="1" height="1"><path d="M-4.8 -10.8 L-4 6.7 L-1.6 3.2 L0.7 8.4 L3.6 7.3 L1.9 1.4 L7.7 1.4Z" fill="none" stroke="#3ad16a" stroke-width="1.4" stroke-linejoin="miter"/></svg>
<svg style="left:509px;top:140px" width="1" height="1"><path d="M-5 -10 L9.4 3.4 L0.5 3.6 L-5 9.8Z" fill="#dedede"/></svg>
<svg style="left:509px;top:170px" width="1" height="1"><path d="M-8.5 -8 C-4 -7.5 1 -6 5 -2 L2 1 L-2.5 3.5 C-5 0 -7 -4 -8.5 -8Z" fill="#dedede"/><path d="M5 -2 L2 1 L-2.5 3.5 L3 9 L8 4Z" fill="#dedede"/><circle cx="-1.7" cy="-1.3" r="1.3" fill="#444"/><path d="M-8 -7.5 L-2 -1.5" stroke="#444" stroke-width="0.7"/><path d="M3.5 3.5 L7 7 M2 5 L5.5 8.5" stroke="#444" stroke-width="0.6"/></svg>
<svg style="left:509px;top:199px" width="1" height="1"><path d="M-8.5 8.5 L-7 4.5 L4.5 -7 L8 -3.5 L-3.5 8Z" fill="#dedede"/><circle cx="6.3" cy="-5.3" r="2.6" fill="#dedede"/><path d="M-8.5 8.5 L-7.3 5.5 L-5.5 7.3Z" fill="#777"/></svg>
<svg style="left:509px;top:229px" width="1" height="1"><rect x="-10.4" y="-5" width="13.5" height="12" rx="1.2" fill="#dedede"/><path d="M3 1 L10 -4.5 V6.5Z" fill="#dedede"/><rect x="-8.5" y="-7" width="6" height="1.2" fill="#dedede"/><circle cx="-7.5" cy="-2.3" r="1.2" fill="#444"/></svg>
<svg style="left:509px;top:259.5px" width="1" height="1"><path d="M-7 7 L7 -7" stroke="#dedede" stroke-width="1.2"/></svg>
<svg style="left:509px;top:290px" width="1" height="1"><path d="M-7 -7 H7 V-3.5 H2 V8 H-2 V-3.5 H-7Z" fill="#dedede"/></svg>
<svg style="left:509px;top:319px" width="1" height="1"><path d="M-7.5 -7 L1 -1.5 L-3 -0.5 L-7 5Z" fill="#dedede"/><path d="M-8 9 H8 L5 -7.5 L-1 -6.5" fill="none" stroke="#dedede" stroke-width="0.9" stroke-dasharray="2.2 1.3"/><rect x="-9" y="8" width="2.2" height="2.2" fill="#dedede"/><rect x="7" y="8" width="2.2" height="2.2" fill="#dedede"/><rect x="4" y="-8.5" width="2.2" height="2.2" fill="#dedede"/></svg>
<svg style="left:509px;top:349px" width="1" height="1"><rect x="-7" y="-7" width="14" height="14" fill="#dedede"/></svg>
<svg style="left:509px;top:380px" width="1" height="1"><circle cx="0" cy="0" r="8" fill="#dedede"/></svg>
<svg style="left:509px;top:409px" width="1" height="1"><path d="M0 -8 L8 -2 L5 7.5 H-5 L-8 -2Z" fill="#dedede"/></svg>
<svg style="left:509px;top:439.5px" width="1" height="1"><path d="M0 -8.5 L2.3 -2.8 L8.5 -2.6 L3.6 1.2 L5.3 7.5 L0 3.8 L-5.3 7.5 L-3.6 1.2 L-8.5 -2.6 L-2.3 -2.8Z" fill="#dedede"/></svg>
<svg style="left:509px;top:469.6px" width="1" height="1"><path d="M6 -1 A7 7 0 1 0 -2 6.8" fill="none" stroke="#dedede" stroke-width="3"/></svg>
<svg style="left:509px;top:500px" width="1" height="1"><path d="M0 -8.5 Q1 -1 8.5 0 Q1 1 0 8.5 Q-1 1 -8.5 0 Q-1 -1 0 -8.5Z" fill="#dedede"/></svg>
<svg style="left:509px;top:530px" width="1" height="1"><circle cx="0" cy="0" r="6.3" fill="#dedede"/><rect x="-1.8" y="-9" width="3.6" height="4" fill="#dedede" transform="rotate(0)"/><rect x="-1.8" y="-9" width="3.6" height="4" fill="#dedede" transform="rotate(45)"/><rect x="-1.8" y="-9" width="3.6" height="4" fill="#dedede" transform="rotate(90)"/><rect x="-1.8" y="-9" width="3.6" height="4" fill="#dedede" transform="rotate(135)"/><rect x="-1.8" y="-9" width="3.6" height="4" fill="#dedede" transform="rotate(180)"/><rect x="-1.8" y="-9" width="3.6" height="4" fill="#dedede" transform="rotate(225)"/><rect x="-1.8" y="-9" width="3.6" height="4" fill="#dedede" transform="rotate(270)"/><rect x="-1.8" y="-9" width="3.6" height="4" fill="#dedede" transform="rotate(315)"/><circle cx="0" cy="0" r="2.6" fill="#444"/></svg>
<svg style="left:509px;top:560px" width="1" height="1"><path d="M-11 0 L-5 -6 V-2.3 H5 V-6 L11 0 L5 6 V2.3 H-5 V6Z" fill="#dedede"/></svg>
<svg style="left:509px;top:590px" width="1" height="1"><rect x="-10" y="-3.5" width="20" height="7" rx="3.5" fill="#dedede"/></svg>
<div class="a" style="left:530px;top:85px;width:1057px;height:22px;background:#1c1c1c"></div>
<div class="a" style="left:530px;top:85px;width:1057px;height:1px;background:#33c566"></div>
<div class="a" style="left:530px;top:86px;width:79px;height:21px;background:#474747;border-radius:3px 3px 0 0"></div>
<div class="t" style="left:535px;top:91px;color:#e6e6e6">Typing Text 2</div>
<div class="a" style="left:530px;top:107px;width:1057px;height:506px;background:#474747"></div>
<div class="a" style="left:1587px;top:85px;width:6px;height:534px;background:#1b1b1b"></div>
<div class="t" style="left:535px;top:112px;color:#aaa;font-size:10.5px">px</div>
<svg style="left:0;top:0" width="1920" height="1030"><rect x="556" y="124" width="1" height="3" fill="#a0a0a0"/><rect x="568" y="124" width="1" height="3" fill="#a0a0a0"/><rect x="580" y="120" width="1" height="7" fill="#b0b0b0"/><rect x="592" y="124" width="1" height="3" fill="#a0a0a0"/><rect x="605" y="124" width="1" height="3" fill="#a0a0a0"/><rect x="617" y="124" width="1" height="3" fill="#a0a0a0"/><rect x="629" y="124" width="1" height="3" fill="#a0a0a0"/><rect x="641" y="120" width="1" height="7" fill="#b0b0b0"/><rect x="653" y="124" width="1" height="3" fill="#a0a0a0"/><rect x="666" y="124" width="1" height="3" fill="#a0a0a0"/><rect x="678" y="124" width="1" height="3" fill="#a0a0a0"/><rect x="690" y="124" width="1" height="3" fill="#a0a0a0"/><rect x="702" y="120" width="1" height="7" fill="#b0b0b0"/><rect x="714" y="124" width="1" height="3" fill="#a0a0a0"/><rect x="727" y="124" width="1" height="3" fill="#a0a0a0"/><rect x="739" y="124" width="1" height="3" fill="#a0a0a0"/><rect x="751" y="124" width="1" height="3" fill="#a0a0a0"/><rect x="763" y="120" width="1" height="7" fill="#b0b0b0"/><rect x="775" y="124" width="1" height="3" fill="#a0a0a0"/><rect x="788" y="124" width="1" height="3" fill="#a0a0a0"/><rect x="800" y="124" width="1" height="3" fill="#a0a0a0"/><rect x="812" y="124" width="1" height="3" fill="#a0a0a0"/><rect x="824" y="120" width="1" height="7" fill="#b0b0b0"/><rect x="836" y="124" width="1" height="3" fill="#a0a0a0"/><rect x="849" y="124" width="1" height="3" fill="#a0a0a0"/><rect x="861" y="124" width="1" height="3" fill="#a0a0a0"/><rect x="873" y="124" width="1" height="3" fill="#a0a0a0"/><rect x="885" y="120" width="1" height="7" fill="#b0b0b0"/><rect x="897" y="124" width="1" height="3" fill="#a0a0a0"/><rect x="910" y="124" width="1" height="3" fill="#a0a0a0"/><rect x="922" y="124" width="1" height="3" fill="#a0a0a0"/><rect x="934" y="124" width="1" height="3" fill="#a0a0a0"/><rect x="946" y="120" width="1" height="7" fill="#b0b0b0"/><rect x="958" y="124" width="1" height="3" fill="#a0a0a0"/><rect x="971" y="124" width="1" height="3" fill="#a0a0a0"/><rect x="983" y="124" width="1" height="3" fill="#a0a0a0"/><rect x="995" y="124" width="1" height="3" fill="#a0a0a0"/><rect x="1007" y="120" width="1" height="7" fill="#b0b0b0"/><rect x="1019" y="124" width="1" height="3" fill="#a0a0a0"/><rect x="1032" y="124" width="1" height="3" fill="#a0a0a0"/><rect x="1044" y="124" width="1" height="3" fill="#a0a0a0"/><rect x="1056" y="124" width="1" height="3" fill="#a0a0a0"/><rect x="1068" y="120" width="1" height="7" fill="#b0b0b0"/><rect x="1080" y="124" width="1" height="3" fill="#a0a0a0"/><rect x="1093" y="124" width="1" height="3" fill="#a0a0a0"/><rect x="1105" y="124" width="1" height="3" fill="#a0a0a0"/><rect x="1117" y="124" width="1" height="3" fill="#a0a0a0"/><rect x="1129" y="120" width="1" height="7" fill="#b0b0b0"/><rect x="1141" y="124" width="1" height="3" fill="#a0a0a0"/><rect x="1154" y="124" width="1" height="3" fill="#a0a0a0"/><rect x="1166" y="124" width="1" height="3" fill="#a0a0a0"/><rect x="1178" y="124" width="1" height="3" fill="#a0a0a0"/><rect x="1190" y="120" width="1" height="7" fill="#b0b0b0"/><rect x="1202" y="124" width="1" height="3" fill="#a0a0a0"/><rect x="1215" y="124" width="1" height="3" fill="#a0a0a0"/><rect x="1227" y="124" width="1" height="3" fill="#a0a0a0"/><rect x="1239" y="124" width="1" height="3" fill="#a0a0a0"/><rect x="1251" y="120" width="1" height="7" fill="#b0b0b0"/><rect x="1263" y="124" width="1" height="3" fill="#a0a0a0"/><rect x="1276" y="124" width="1" height="3" fill="#a0a0a0"/><rect x="1288" y="124" width="1" height="3" fill="#a0a0a0"/><rect x="1300" y="124" width="1" height="3" fill="#a0a0a0"/><rect x="1312" y="120" width="1" height="7" fill="#b0b0b0"/><rect x="1324" y="124" width="1" height="3" fill="#a0a0a0"/><rect x="1337" y="124" width="1" height="3" fill="#a0a0a0"/><rect x="1349" y="124" width="1" height="3" fill="#a0a0a0"/><rect x="1361" y="124" width="1" height="3" fill="#a0a0a0"/><rect x="1373" y="120" width="1" height="7" fill="#b0b0b0"/><rect x="1385" y="124" width="1" height="3" fill="#a0a0a0"/><rect x="1398" y="124" width="1" height="3" fill="#a0a0a0"/><rect x="1410" y="124" width="1" height="3" fill="#a0a0a0"/><rect x="1422" y="124" width="1" height="3" fill="#a0a0a0"/><rect x="1434" y="120" width="1" height="7" fill="#b0b0b0"/><rect x="1446" y="124" width="1" height="3" fill="#a0a0a0"/><rect x="1459" y="124" width="1" height="3" fill="#a0a0a0"/><rect x="1471" y="124" width="1" height="3" fill="#a0a0a0"/><rect x="1483" y="124" width="1" height="3" fill="#a0a0a0"/><rect x="1495" y="120" width="1" height="7" fill="#b0b0b0"/><rect x="1507" y="124" width="1" height="3" fill="#a0a0a0"/><rect x="1520" y="124" width="1" height="3" fill="#a0a0a0"/><rect x="1532" y="124" width="1" height="3" fill="#a0a0a0"/><rect x="1544" y="124" width="1" height="3" fill="#a0a0a0"/><rect x="1556" y="120" width="1" height="7" fill="#b0b0b0"/><rect x="1568" y="124" width="1" height="3" fill="#a0a0a0"/><rect x="1581" y="124" width="1" height="3" fill="#a0a0a0"/></svg>
<div class="t" style="left:550.7px;width:60px;text-align:center;top:109px;color:#bdbdbd;font-size:10.5px">-1200</div>
<div class="t" style="left:611.7px;width:60px;text-align:center;top:109px;color:#bdbdbd;font-size:10.5px">-1050</div>
<div class="t" style="left:672.7px;width:60px;text-align:center;top:109px;color:#bdbdbd;font-size:10.5px">-900</div>
<div class="t" style="left:733.7px;width:60px;text-align:center;top:109px;color:#bdbdbd;font-size:10.5px">-750</div>
<div class="t" style="left:794.7px;width:60px;text-align:center;top:109px;color:#bdbdbd;font-size:10.5px">-600</div>
<div class="t" style="left:855.7px;width:60px;text-align:center;top:109px;color:#bdbdbd;font-size:10.5px">-450</div>
<div class="t" style="left:916.7px;width:60px;text-align:center;top:109px;color:#bdbdbd;font-size:10.5px">-300</div>
<div class="t" style="left:977.7px;width:60px;text-align:center;top:109px;color:#bdbdbd;font-size:10.5px">-150</div>
<div class="t" style="left:1038.7px;width:60px;text-align:center;top:109px;color:#bdbdbd;font-size:10.5px">0</div>
<div class="t" style="left:1099.7px;width:60px;text-align:center;top:109px;color:#bdbdbd;font-size:10.5px">150</div>
<div class="t" style="left:1160.7px;width:60px;text-align:center;top:109px;color:#bdbdbd;font-size:10.5px">300</div>
<div class="t" style="left:1221.7px;width:60px;text-align:center;top:109px;color:#bdbdbd;font-size:10.5px">450</div>
<div class="t" style="left:1282.7px;width:60px;text-align:center;top:109px;color:#bdbdbd;font-size:10.5px">600</div>
<div class="t" style="left:1343.7px;width:60px;text-align:center;top:109px;color:#bdbdbd;font-size:10.5px">750</div>
<div class="t" style="left:1404.7px;width:60px;text-align:center;top:109px;color:#bdbdbd;font-size:10.5px">900</div>
<div class="t" style="left:1465.7px;width:60px;text-align:center;top:109px;color:#bdbdbd;font-size:10.5px">1050</div>
<div class="t" style="left:1526.7px;width:60px;text-align:center;top:109px;color:#bdbdbd;font-size:10.5px">1200</div>
<svg style="left:0;top:0" width="1920" height="1030"><rect x="546" y="578" width="4" height="1" fill="#a0a0a0"/><rect x="546" y="565" width="4" height="1" fill="#a0a0a0"/><rect x="546" y="553" width="4" height="1" fill="#a0a0a0"/><rect x="543" y="541" width="7" height="1" fill="#b0b0b0"/><rect x="546" y="529" width="4" height="1" fill="#a0a0a0"/><rect x="546" y="517" width="4" height="1" fill="#a0a0a0"/><rect x="546" y="504" width="4" height="1" fill="#a0a0a0"/><rect x="546" y="492" width="4" height="1" fill="#a0a0a0"/><rect x="543" y="480" width="7" height="1" fill="#b0b0b0"/><rect x="546" y="468" width="4" height="1" fill="#a0a0a0"/><rect x="546" y="456" width="4" height="1" fill="#a0a0a0"/><rect x="546" y="443" width="4" height="1" fill="#a0a0a0"/><rect x="546" y="431" width="4" height="1" fill="#a0a0a0"/><rect x="543" y="419" width="7" height="1" fill="#b0b0b0"/><rect x="546" y="407" width="4" height="1" fill="#a0a0a0"/><rect x="546" y="395" width="4" height="1" fill="#a0a0a0"/><rect x="546" y="382" width="4" height="1" fill="#a0a0a0"/><rect x="546" y="370" width="4" height="1" fill="#a0a0a0"/><rect x="543" y="358" width="7" height="1" fill="#b0b0b0"/><rect x="546" y="346" width="4" height="1" fill="#a0a0a0"/><rect x="546" y="334" width="4" height="1" fill="#a0a0a0"/><rect x="546" y="321" width="4" height="1" fill="#a0a0a0"/><rect x="546" y="309" width="4" height="1" fill="#a0a0a0"/><rect x="543" y="297" width="7" height="1" fill="#b0b0b0"/><rect x="546" y="285" width="4" height="1" fill="#a0a0a0"/><rect x="546" y="273" width="4" height="1" fill="#a0a0a0"/><rect x="546" y="260" width="4" height="1" fill="#a0a0a0"/><rect x="546" y="248" width="4" height="1" fill="#a0a0a0"/><rect x="543" y="236" width="7" height="1" fill="#b0b0b0"/><rect x="546" y="224" width="4" height="1" fill="#a0a0a0"/><rect x="546" y="212" width="4" height="1" fill="#a0a0a0"/><rect x="546" y="199" width="4" height="1" fill="#a0a0a0"/><rect x="546" y="187" width="4" height="1" fill="#a0a0a0"/><rect x="543" y="175" width="7" height="1" fill="#b0b0b0"/><rect x="546" y="163" width="4" height="1" fill="#a0a0a0"/><rect x="546" y="151" width="4" height="1" fill="#a0a0a0"/><rect x="546" y="138" width="4" height="1" fill="#a0a0a0"/></svg>
<div class="t" style="left:507px;top:536.5px;width:60px;text-align:center;color:#bdbdbd;font-size:10.5px;transform:rotate(-90deg)">-450</div>
<div class="t" style="left:507px;top:475.5px;width:60px;text-align:center;color:#bdbdbd;font-size:10.5px;transform:rotate(-90deg)">-300</div>
<div class="t" style="left:507px;top:414.5px;width:60px;text-align:center;color:#bdbdbd;font-size:10.5px;transform:rotate(-90deg)">-150</div>
<div class="t" style="left:507px;top:353.5px;width:60px;text-align:center;color:#bdbdbd;font-size:10.5px;transform:rotate(-90deg)">0</div>
<div class="t" style="left:507px;top:292.5px;width:60px;text-align:center;color:#bdbdbd;font-size:10.5px;transform:rotate(-90deg)">150</div>
<div class="t" style="left:507px;top:231.5px;width:60px;text-align:center;color:#bdbdbd;font-size:10.5px;transform:rotate(-90deg)">300</div>
<div class="t" style="left:507px;top:170.5px;width:60px;text-align:center;color:#bdbdbd;font-size:10.5px;transform:rotate(-90deg)">450</div>
<div class="a" style="left:550px;top:127px;width:1037px;height:464px;background:#000"></div>
<div class="a" style="left:677px;top:139px;width:782px;height:440px;background:#fff"></div>
<div class="t" style="left:980px;top:327px;color:#646464;font-size:53px;font-weight:bold">Cavalr</div>
<div class="t" style="left:569.5px;top:494.7px;color:#fff;font-size:11.6px">Hold S <span style="color:rgba(170,170,170,0.72)">Direct Layer Selection</span></div>
<div class="t" style="left:569.5px;top:508.8px;color:#fff;font-size:11.6px">Space <span style="color:rgba(170,170,170,0.72)">Play/ Stop</span></div>
<div class="t" style="left:569.5px;top:522.9px;color:#fff;font-size:11.6px">Space + click + drag <span style="color:rgba(170,170,170,0.72)">Pan</span></div>
<div class="t" style="left:569.5px;top:537.0px;color:#fff;font-size:11.6px">Alt + click + drag <span style="color:rgba(170,170,170,0.72)">Move Pivot Point</span></div>
<div class="t" style="left:569.5px;top:551.1px;color:#fff;font-size:11.6px">Shift <span style="color:rgba(170,170,170,0.72)">Enable Snapping</span></div>
<div class="t" style="left:998px;top:571.5px;color:#111;font-size:12px;text-shadow:1px 0 0 #ccc,-1px 0 0 #ccc,0 1px 0 #ccc,0 -1px 0 #ccc">Viewport Quality: High</div>
<div class="a" style="left:535px;top:593px;width:78px;height:16px;background:#2b2b2b;border-radius:3px"></div>
<div class="t" style="left:538px;top:596px;color:#e6e6e6">41%</div>
<svg style="left:600px;top:599px" width="9" height="5"><path d="M0.5 0.5 L4.5 4.5 L8.5 0.5" fill="none" stroke="#aaa" stroke-width="1"/></svg>
<div class="a" style="left:866.5px;top:593px;width:99px;height:18px;background:#2b2b2b;border:1px solid #232323;border-radius:4px"></div>
<div class="a" style="left:885.5px;top:594px;width:1px;height:16px;background:#1e1e1e"></div>
<div class="a" style="left:905.5px;top:594px;width:1px;height:16px;background:#1e1e1e"></div>
<div class="a" style="left:925.5px;top:594px;width:1px;height:16px;background:#1e1e1e"></div>
<div class="a" style="left:945.5px;top:594px;width:1px;height:16px;background:#1e1e1e"></div>
<svg style="left:876px;top:602px" width="1" height="1"><rect x="-5" y="-5" width="1.5" height="10" fill="#ddd"/><path d="M5 -5 V5 L-3 0Z" fill="#ddd"/></svg>
<svg style="left:896px;top:602px" width="1" height="1"><path d="M2 -5 V5 L-5 0Z" fill="#ddd"/><rect x="3.5" y="-5" width="1.5" height="10" fill="#ddd"/></svg>
<svg style="left:915.5px;top:602px" width="1" height="1"><path d="M-3.5 -5 V5 L4.5 0Z" fill="#ddd"/></svg>
<svg style="left:935.5px;top:602px" width="1" height="1"><rect x="-5" y="-5" width="1.5" height="10" fill="#ddd"/><path d="M-2 -5 V5 L5 0Z" fill="#ddd"/></svg>
<svg style="left:956px;top:602px" width="1" height="1"><path d="M-5 -5 V5 L3 0Z" fill="#ddd"/><rect x="3.5" y="-5" width="1.5" height="10" fill="#ddd"/></svg>
<div class="a" style="left:971px;top:593px;width:19px;height:18px;background:#2b2b2b;border:1px solid #232323;border-radius:4px"></div>
<svg style="left:980.5px;top:602px" width="1" height="1"><path d="M-6 -3 V5 H6 V1" fill="none" stroke="#ddd" stroke-width="1.4"/><path d="M-3 1 V-2 H3" fill="none" stroke="#ddd" stroke-width="1.4"/><path d="M2.5 -5 L6 -2 L2.5 1Z" fill="#ddd"/></svg>
<div class="a" style="left:1232.3px;top:593px;width:36.5px;height:18px;background:#2b2b2b;border-radius:4px"></div>
<svg style="left:1234px;top:598px" width="13" height="9"><path d="M3.5 0 H12 V9 H3.5 L0 4.5Z" fill="#ddd"/><circle cx="4" cy="4.5" r="1.3" fill="#2b2b2b"/></svg>
<div class="t" style="left:1256px;top:596.5px;color:#c8c8c8">0</div>
<div class="a" style="left:1272.3px;top:593px;width:30.700000000000045px;height:18px;background:#2b2b2b;border:1px solid #232323;border-radius:4px"></div>
<svg style="left:1272.3px;top:593px" width="1" height="1"><path d="M5 7 H8 L12 3.5 V14.5 L8 11 H5Z" fill="#3ad16a"/><path d="M13.5 6.5 Q15.5 9 13.5 11.5 M15.5 5 Q18.5 9 15.5 13" fill="none" stroke="#3ad16a" stroke-width="1.3"/></svg>
<div class="a" style="left:1291px;top:594px;width:1px;height:16px;background:#1e1e1e"></div>
<svg style="left:1295px;top:598.5px" width="6" height="8"><path d="M0.7 0.7 L5 4 L0.7 7.3Z" fill="none" stroke="#888" stroke-width="0.9"/></svg>
<div class="a" style="left:1308.3px;top:594px;width:17.5px;height:16px;background:#454545;border-radius:3px 0 0 3px"></div>
<div class="a" style="left:1307.3px;top:593px;width:31.200000000000045px;height:18px;background:#2b2b2b;border:1px solid #232323;border-radius:4px"></div>
<svg style="left:1307.3px;top:593px" width="1" height="1"><rect x="1" y="1" width="17.5" height="16" rx="3" fill="#454545"/><path d="M9.5 14.2 L5.9 10.6 A3.82 3.82 0 0 1 11.3 5.2 L14.6 8.7" fill="none" stroke="#ddd" stroke-width="1.9" stroke-linecap="round"/></svg>
<div class="a" style="left:1326.5px;top:594px;width:1px;height:16px;background:#1e1e1e"></div>
<svg style="left:1330.5px;top:598.5px" width="6" height="8"><path d="M0.7 0.7 L5 4 L0.7 7.3Z" fill="none" stroke="#888" stroke-width="0.9"/></svg>
<div class="a" style="left:1342.3px;top:593px;width:30.700000000000045px;height:18px;background:#2b2b2b;border:1px solid #232323;border-radius:4px"></div>
<svg style="left:1342.3px;top:593px" width="1" height="1"><rect x="1" y="1" width="17.5" height="16" rx="3" fill="#454545"/><path d="M4 6.5 H16 M4 11.5 H16 M7.5 3 V16 M12.5 3 V16" stroke="#ddd" stroke-width="1.3"/></svg>
<div class="a" style="left:1361px;top:594px;width:1px;height:16px;background:#1e1e1e"></div>
<svg style="left:1365px;top:598.5px" width="6" height="8"><path d="M0.7 0.7 L5 4 L0.7 7.3Z" fill="none" stroke="#888" stroke-width="0.9"/></svg>
<div class="a" style="left:1377px;top:593px;width:19px;height:18px;background:#2b2b2b;border:1px solid #232323;border-radius:4px"></div>
<svg style="left:1377px;top:593px" width="1" height="1"><rect x="2.5" y="3" width="3" height="3" fill="#3ad16a"/><rect x="2.5" y="7.5" width="3" height="7" fill="#3ad16a"/><rect x="7" y="3.7" width="9.3" height="4.6" fill="none" stroke="#3ad16a" stroke-width="1.3"/><rect x="6.5" y="10" width="10.5" height="4.5" fill="#3ad16a"/></svg>
<div class="a" style="left:1400.4px;top:593px;width:19.199999999999818px;height:18px;background:#2b2b2b;border:1px solid #232323;border-radius:4px"></div>
<svg style="left:1400.4px;top:593px" width="1" height="1"><path d="M3 5 L6.5 9 L3 13 M7.5 5 L11 9 L7.5 13 M12 5 L15.5 9 L12 13" fill="none" stroke="#ddd" stroke-width="1.7"/></svg>
<div class="a" style="left:1423.3px;top:593px;width:30.700000000000045px;height:18px;background:#2b2b2b;border:1px solid #232323;border-radius:4px"></div>
<svg style="left:1423.3px;top:593px" width="1" height="1"><rect x="1" y="1" width="17.5" height="16" rx="3" fill="#454545"/><rect x="3.5" y="4" width="14" height="9.5" fill="none" stroke="#ddd" stroke-width="1.3"/><rect x="3" y="13" width="15" height="2" fill="#ccc"/></svg>
<div class="a" style="left:1442px;top:594px;width:1px;height:16px;background:#1e1e1e"></div>
<svg style="left:1446px;top:598.5px" width="6" height="8"><path d="M0.7 0.7 L5 4 L0.7 7.3Z" fill="none" stroke="#888" stroke-width="0.9"/></svg>
<div class="a" style="left:1458.3px;top:593px;width:30.700000000000045px;height:18px;background:#2b2b2b;border:1px solid #232323;border-radius:4px"></div>
<svg style="left:1458.3px;top:593px" width="1" height="1"><rect x="1" y="1" width="17.5" height="16" rx="3" fill="#454545"/><rect x="3" y="3" width="9" height="6" fill="none" stroke="#bbb" stroke-width="1"/><path d="M5 10.5 H14 V5.5 M7 12.5 H16 V7.5 M9 14.5 H18 V9.5" fill="none" stroke="#aaa" stroke-width="0.9"/></svg>
<div class="a" style="left:1477px;top:594px;width:1px;height:16px;background:#1e1e1e"></div>
<svg style="left:1481px;top:598.5px" width="6" height="8"><path d="M0.7 0.7 L5 4 L0.7 7.3Z" fill="none" stroke="#888" stroke-width="0.9"/></svg>
<div class="a" style="left:1493.3px;top:593px;width:30.700000000000045px;height:18px;background:#2b2b2b;border:1px solid #232323;border-radius:4px"></div>
<svg style="left:1493.3px;top:593px" width="1" height="1"><rect x="1" y="1" width="17.5" height="16" rx="3" fill="#454545"/><rect x="3" y="3" width="9" height="9" fill="#aaa"/><rect x="7.5" y="7.5" width="9" height="9" fill="#2b2b2b" stroke="#ddd" stroke-width="1.3"/></svg>
<div class="a" style="left:1512px;top:594px;width:1px;height:16px;background:#1e1e1e"></div>
<svg style="left:1516px;top:598.5px" width="6" height="8"><path d="M0.7 0.7 L5 4 L0.7 7.3Z" fill="none" stroke="#888" stroke-width="0.9"/></svg>
<div class="a" style="left:1528.5px;top:593px;width:30.5px;height:18px;background:#2b2b2b;border:1px solid #232323;border-radius:4px"></div>
<svg style="left:1528.5px;top:593px" width="1" height="1"><rect x="3.0" y="3.0" width="2.5" height="2.5" fill="#3ad16a"/><rect x="3.0" y="8.0" width="2.5" height="2.5" fill="#3ad16a"/><rect x="3.0" y="13.0" width="2.5" height="2.5" fill="#3ad16a"/><rect x="5.5" y="5.5" width="2.5" height="2.5" fill="#3ad16a"/><rect x="5.5" y="10.5" width="2.5" height="2.5" fill="#3ad16a"/><rect x="8.0" y="3.0" width="2.5" height="2.5" fill="#3ad16a"/><rect x="8.0" y="8.0" width="2.5" height="2.5" fill="#3ad16a"/><rect x="8.0" y="13.0" width="2.5" height="2.5" fill="#3ad16a"/><rect x="10.5" y="5.5" width="2.5" height="2.5" fill="#3ad16a"/><rect x="10.5" y="10.5" width="2.5" height="2.5" fill="#3ad16a"/><rect x="13.0" y="3.0" width="2.5" height="2.5" fill="#3ad16a"/><rect x="13.0" y="8.0" width="2.5" height="2.5" fill="#3ad16a"/><rect x="13.0" y="13.0" width="2.5" height="2.5" fill="#3ad16a"/></svg>
<div class="a" style="left:1547px;top:594px;width:1px;height:16px;background:#1e1e1e"></div>
<svg style="left:1551px;top:598.5px" width="6" height="8"><path d="M0.7 0.7 L5 4 L0.7 7.3Z" fill="none" stroke="#888" stroke-width="0.9"/></svg>
<div class="a" style="left:1563.5px;top:593px;width:19.5px;height:18px;background:#2b2b2b;border:1px solid #232323;border-radius:4px"></div>
<svg style="left:1573px;top:602px" width="1" height="1"><circle cx="0" cy="0" r="4.6" fill="#ddd"/><rect x="-1.4" y="-6.6" width="2.8" height="3" fill="#ddd" transform="rotate(0)"/><rect x="-1.4" y="-6.6" width="2.8" height="3" fill="#ddd" transform="rotate(45)"/><rect x="-1.4" y="-6.6" width="2.8" height="3" fill="#ddd" transform="rotate(90)"/><rect x="-1.4" y="-6.6" width="2.8" height="3" fill="#ddd" transform="rotate(135)"/><rect x="-1.4" y="-6.6" width="2.8" height="3" fill="#ddd" transform="rotate(180)"/><rect x="-1.4" y="-6.6" width="2.8" height="3" fill="#ddd" transform="rotate(225)"/><rect x="-1.4" y="-6.6" width="2.8" height="3" fill="#ddd" transform="rotate(270)"/><rect x="-1.4" y="-6.6" width="2.8" height="3" fill="#ddd" transform="rotate(315)"/><circle cx="0" cy="0" r="2.1" fill="#2b2b2b"/></svg><!-- ===== COLOR PANEL ===== -->
<div class="a" style="left:1593px;top:85px;width:321px;height:22px;background:#1c1c1c"></div>
<div class="a" style="left:1593px;top:85px;width:40px;height:22px;background:#444;border-radius:3px 3px 0 0"></div>
<div class="a" style="left:1633px;top:85px;width:69px;height:22px;background:#262626;border-radius:3px 3px 0 0"></div>
<div class="t" style="left:1598px;top:91px;color:#e6e6e6">Color</div>
<div class="t" style="left:1639px;top:91px;color:#e6e6e6">Add Layers</div>
<div class="a" style="left:1593px;top:107px;width:307px;height:410px;background:#444"></div>
<div class="a" style="left:1900px;top:107px;width:14px;height:410px;background:#3a3a3a"></div>
<div class="a" style="left:1902px;top:108px;width:10px;height:356px;background:#525252;border-radius:5px"></div>
<div class="a" style="left:1646px;top:119.6px;width:200px;height:200px;border-radius:50%;background:conic-gradient(hsl(90,100%,50%) 0deg,hsl(60,100%,50%) 30deg,hsl(30,100%,50%) 60deg,hsl(0,100%,50%) 90deg,hsl(330,100%,50%) 120deg,hsl(300,100%,50%) 150deg,hsl(270,100%,50%) 180deg,hsl(240,100%,50%) 210deg,hsl(210,100%,50%) 240deg,hsl(180,100%,50%) 270deg,hsl(150,100%,50%) 300deg,hsl(120,100%,50%) 330deg,hsl(90,100%,50%) 360deg)"></div>
<div class="a" style="left:1671px;top:144.6px;width:150px;height:150px;border-radius:50%;background:#444"></div>
<div class="a" style="left:1702px;top:176px;width:90px;height:90px;background:linear-gradient(to right,#000,rgba(0,0,0,0)),linear-gradient(to bottom,#fff,#f00)"></div>
<svg style="left:1745px;top:176px" width="1" height="1"><circle cx="0" cy="0" r="6" fill="none" stroke="#ddd" stroke-width="1.2"/></svg>
<svg style="left:1833px;top:220px" width="1" height="1"><circle cx="0" cy="0" r="6" fill="none" stroke="#fff" stroke-width="1.2"/></svg>

<div class="a" style="left:1600px;top:333px;width:22px;height:21px;background:#7a7a7a;border-radius:3px"></div>
<div class="t" style="left:1625px;top:339px;color:#e8e8e8">Gray</div>
<div class="a btn" style="left:1871px;top:333px;width:22px;height:21px"></div>
<svg style="left:1875px;top:337px" width="14" height="14"><path d="M1.5 12.5 L8 6" stroke="#ddd" stroke-width="1.3" fill="none"/><path d="M1.2 12.8 L1.8 11" stroke="#ddd" stroke-width="1"/><path d="M6.5 4.5 L9.5 7.5" stroke="#ddd" stroke-width="1.8"/><circle cx="10" cy="4" r="2.3" fill="#ddd"/><path d="M8 6 L10 4" stroke="#ddd" stroke-width="2.5"/></svg>
<div class="a" style="left:1600px;top:360.5px;width:49px;height:17px;background:#474747;border:1px solid #333;border-radius:3px"></div>
<div class="t" style="left:1603px;top:364px;color:#e8e8e8">Hex</div>
<svg style="left:1636px;top:367px" width="9" height="5"><path d="M0.5 0.5 L4.5 4.5 L8.5 0.5" fill="none" stroke="#aaa" stroke-width="1"/></svg>
<div class="a" style="left:1653px;top:360.5px;width:240px;height:19px;background:#2b2b2b;border-radius:2px"></div>
<div class="t" style="left:1659px;top:365px;color:#555;font-size:11px">#</div>
<div class="t" style="left:1669px;top:364.5px;color:#e8e8e8">7a7a7a</div>
<div class="a" style="left:1600px;top:390.5px;width:236px;height:3px;background:#e0e0e0;border-radius:2px"></div>
<svg style="left:1834px;top:392px" width="1" height="1"><circle cx="0" cy="0" r="5" fill="#6fcf9f"/><circle cx="0" cy="0" r="2" fill="#55b585"/></svg>
<div class="a" style="left:1849px;top:384.5px;width:44px;height:15px;background:#2b2b2b;border-radius:2px"></div>
<div class="t" style="left:1855px;top:387px;color:#4a4a4a">A</div>
<div class="t" style="left:1866px;top:387px;color:#e8e8e8">255</div>

<div class="a" style="left:1597px;top:406px;width:299px;height:22px;background:#2b2b2b"></div>
<div class="a" style="left:1599px;top:408px;width:148px;height:20px;background:#474747;border-radius:3px 3px 0 0"></div>
<div class="t" style="left:1648px;top:411.5px;color:#e8e8e8">Swatches</div>
<div class="t" style="left:1793px;top:411.5px;color:#bdbdbd">Generator</div>
<div class="a" style="left:1598px;top:431px;width:257px;height:18px;background:#555;border-radius:3px"></div>
<div class="a" style="left:1599.5px;top:432px;width:61.5px;height:16px;background:#262626;border-radius:3px"></div>
<svg style="left:1605px;top:435px" width="12" height="10"><rect x="0" y="0" width="1.6" height="10" fill="#3ad16a"/><rect x="3" y="0" width="1.6" height="10" fill="#3ad16a"/><path d="M6.5 0 L10.5 10" stroke="#3ad16a" stroke-width="1.6"/></svg>
<div class="t" style="left:1621.5px;top:435px;color:#f0f0f0">Library</div>
<svg style="left:1671px;top:434px" width="11" height="10"><rect x="0" y="2" width="10" height="8" fill="#ccc"/><rect x="0" y="0" width="4" height="2" fill="#ccc"/><rect x="2" y="4" width="1.5" height="1.2" fill="#555"/><rect x="4.5" y="4" width="4.5" height="1.2" fill="#555"/><rect x="2" y="6.5" width="1.5" height="1.2" fill="#555"/><rect x="4.5" y="6.5" width="4.5" height="1.2" fill="#555"/></svg>
<div class="t" style="left:1686px;top:435px;color:#e8e8e8">Project</div>
<svg style="left:1738px;top:434px" width="9" height="11"><path d="M0.6 0.6 H5.5 L8.4 3.5 V10.4 H0.6Z" fill="none" stroke="#ddd" stroke-width="1.1"/></svg>
<div class="t" style="left:1752px;top:435px;color:#e8e8e8">Scene</div>
<svg style="left:1801px;top:434px" width="11" height="11"><path d="M5.5 0.7 A4.8 4.8 0 1 0 10.3 5.5 L5.5 10.3" fill="none" stroke="#ddd" stroke-width="1.1"/></svg>
<div class="t" style="left:1816px;top:435px;color:#e8e8e8">Labels</div>
<div class="a" style="left:1857px;top:431px;width:38px;height:18px;background:#555;border-radius:3px"></div>
<div class="a" style="left:1858px;top:432px;width:17px;height:16px;background:#262626;border-radius:3px"></div>
<svg style="left:1862px;top:435.5px" width="9" height="9"><rect x="0" y="0" width="3.5" height="3.5" fill="#3ad16a"/><rect x="5.5" y="0" width="3.5" height="3.5" fill="#3ad16a"/><rect x="0" y="5.5" width="3.5" height="3.5" fill="#3ad16a"/><rect x="5.5" y="5.5" width="3.5" height="3.5" fill="#3ad16a"/></svg>
<svg style="left:1880px;top:435px" width="11" height="9"><rect x="0" y="0" width="11" height="1.2" fill="#ddd"/><rect x="0" y="3.8" width="11" height="1.2" fill="#ddd"/><rect x="0" y="7.6" width="11" height="1.2" fill="#ddd"/></svg>
<div class="a" style="left:1598px;top:453px;width:275.5px;height:16px;background:#474747;border:1px solid #3a3a3a;border-radius:3px"></div>
<div class="t" style="left:1601.5px;top:456px;color:#e8e8e8">Bright</div>
<svg style="left:1861px;top:459px" width="9" height="5"><path d="M0.5 0.5 L4.5 4.5 L8.5 0.5" fill="none" stroke="#aaa" stroke-width="1"/></svg>
<svg style="left:1880px;top:460px" width="13" height="3"><circle cx="1.5" cy="1.5" r="1.1" fill="#ddd"/><circle cx="6.5" cy="1.5" r="1.1" fill="#ddd"/><circle cx="11.5" cy="1.5" r="1.1" fill="#ddd"/></svg>
<div class="a" style="left:1598px;top:469px;width:297px;height:48px;background:#262626"></div>
<div class="a" style="left:1600px;top:472px;width:18px;height:18px;background:#a35cc8;border-radius:3px"></div>
<div class="a" style="left:1622px;top:472px;width:18px;height:18px;background:#13c1e8;border-radius:3px"></div>
<div class="a" style="left:1644px;top:472px;width:18px;height:18px;background:#f0dc00;border-radius:3px"></div>
<div class="a" style="left:1666px;top:472px;width:18px;height:18px;background:#f07000;border-radius:3px"></div>
<div class="a" style="left:1688px;top:472px;width:18px;height:18px;background:#e80000;border-radius:3px"></div>

<!-- Align -->
<div class="a" style="left:1593px;top:517px;width:321px;height:6px;background:#151515"></div>
<div class="a" style="left:1593px;top:523px;width:321px;height:22px;background:#1c1c1c"></div>
<div class="a" style="left:1593px;top:523px;width:38px;height:22px;background:#444;border-radius:3px 3px 0 0"></div>
<div class="t" style="left:1598px;top:529px;color:#e6e6e6">Align</div>
<div class="a" style="left:1593px;top:545px;width:321px;height:68px;background:#444"></div>
<div class="t" style="left:1601px;top:558.5px;color:#e8e8e8">Alignment</div>
<div class="t" style="left:1601px;top:586px;color:#e8e8e8">Distribution</div>
<div class="a" style="left:1593px;top:613px;width:327px;height:6px;background:#1b1b1b"></div>
<div class="a" style="left:1790.6px;top:555.5px;width:53.2px;height:17px;background:#1e1e1e;border-radius:3px"></div>
<div class="a" style="left:1791.6px;top:556.5px;width:16.4px;height:15px;background:#2e2e2e;border-radius:2px;border-top:1px solid #444"></div>
<svg style="left:1791.6px;top:556.5px" width="16" height="15"><rect x="2" y="2" width="1" height="11" fill="#e0e0e0"/><rect x="4" y="4" width="7" height="2" fill="#e0e0e0"/><rect x="4" y="8.5" width="10" height="2" fill="#e0e0e0"/></svg>
<div class="a" style="left:1809.0px;top:556.5px;width:16.4px;height:15px;background:#2e2e2e;border-radius:2px;border-top:1px solid #444"></div>
<svg style="left:1809.0px;top:556.5px" width="16" height="15"><rect x="7.5" y="2" width="1" height="11" fill="#e0e0e0"/><rect x="4" y="4" width="8" height="2" fill="#e0e0e0"/><rect x="2.5" y="8.5" width="11" height="2" fill="#e0e0e0"/></svg>
<div class="a" style="left:1826.4px;top:556.5px;width:16.4px;height:15px;background:#2e2e2e;border-radius:2px;border-top:1px solid #444"></div>
<svg style="left:1826.4px;top:556.5px" width="16" height="15"><rect x="13" y="2" width="1" height="11" fill="#e0e0e0"/><rect x="5" y="4" width="7" height="2" fill="#e0e0e0"/><rect x="2" y="8.5" width="10" height="2" fill="#e0e0e0"/></svg>
<div class="a" style="left:1853px;top:555.5px;width:53.2px;height:17px;background:#1e1e1e;border-radius:3px"></div>
<div class="a" style="left:1854.0px;top:556.5px;width:16.4px;height:15px;background:#2e2e2e;border-radius:2px;border-top:1px solid #444"></div>
<svg style="left:1854.0px;top:556.5px" width="16" height="15"><rect x="2" y="2" width="11" height="1" fill="#e0e0e0"/><rect x="4" y="4" width="2" height="9" fill="#e0e0e0"/><rect x="9" y="4" width="2" height="5" fill="#e0e0e0"/></svg>
<div class="a" style="left:1871.4px;top:556.5px;width:16.4px;height:15px;background:#2e2e2e;border-radius:2px;border-top:1px solid #444"></div>
<svg style="left:1871.4px;top:556.5px" width="16" height="15"><rect x="2" y="7" width="12" height="1" fill="#e0e0e0"/><rect x="4.5" y="3" width="2" height="9" fill="#e0e0e0"/><rect x="9.5" y="4" width="2" height="7" fill="#e0e0e0"/></svg>
<div class="a" style="left:1888.8px;top:556.5px;width:16.4px;height:15px;background:#2e2e2e;border-radius:2px;border-top:1px solid #444"></div>
<svg style="left:1888.8px;top:556.5px" width="16" height="15"><rect x="2" y="12" width="12" height="1" fill="#e0e0e0"/><rect x="5" y="6" width="2" height="5" fill="#e0e0e0"/><rect x="10" y="2" width="2" height="9" fill="#e0e0e0"/></svg>
<div class="a" style="left:1790.6px;top:584px;width:53.2px;height:17px;background:#1e1e1e;border-radius:3px"></div>
<div class="a" style="left:1791.6px;top:585px;width:16.4px;height:15px;background:#2e2e2e;border-radius:2px;border-top:1px solid #444"></div>
<svg style="left:1791.6px;top:585px" width="16" height="15"><rect x="2" y="2" width="1" height="11" fill="#e0e0e0"/><rect x="13" y="2" width="1" height="11" fill="#e0e0e0"/><rect x="7" y="4" width="2" height="7" fill="#e0e0e0"/></svg>
<div class="a" style="left:1809.0px;top:585px;width:16.4px;height:15px;background:#2e2e2e;border-radius:2px;border-top:1px solid #444"></div>
<svg style="left:1809.0px;top:585px" width="16" height="15"><rect x="2" y="2" width="12" height="1" fill="#e0e0e0"/><rect x="2" y="12" width="12" height="1" fill="#e0e0e0"/><rect x="4" y="6.5" width="8" height="2" fill="#e0e0e0"/></svg>
<div class="a" style="left:1826.4px;top:585px;width:16.4px;height:15px;background:#2e2e2e;border-radius:2px;border-top:1px solid #444"></div>
<svg style="left:1826.4px;top:585px" width="16" height="15"><path d="M2 5 V2 H5 M11 2 H14 V5 M2 10 V13 H5 M14 10 V13 H11" fill="none" stroke="#e0e0e0" stroke-width="1"/><rect x="5" y="8" width="2" height="3" fill="#e0e0e0"/><rect x="9" y="5" width="2" height="3" fill="#e0e0e0"/></svg><div class="a" style="left:494px;top:619px;width:1420px;height:22px;background:#1c1c1c"></div>
<div class="a" style="left:494px;top:619px;width:89px;height:22px;background:#3b3b3b;border-radius:3px 3px 0 0"></div>
<div class="a" style="left:584px;top:619px;width:100px;height:22px;background:#262626;border-radius:3px 3px 0 0"></div>
<div class="a" style="left:685px;top:619px;width:112px;height:22px;background:#262626;border-radius:3px 3px 0 0"></div>
<div class="t" style="left:499.7px;top:625px;font-size:11.7px;color:#e8e8e8">Scene Window</div>
<div class="t" style="left:589px;top:625px;font-size:11.7px;color:#e8e8e8">JavaScript Editor</div>
<div class="t" style="left:690px;top:625px;font-size:11.7px;color:#e8e8e8">Dependency Graph</div>
<div class="a" style="left:494px;top:641px;width:1420px;height:22px;background:#2a2a2a"></div>
<div class="t" style="left:623px;width:200px;text-align:center;top:647px;font-size:11.7px;color:#c0c0c0">Jumping Text Coloring</div>
<svg style="left:951px;top:648px" width="9" height="9"><path d="M0.5 0.5 L8.5 8.5 M8.5 0.5 L0.5 8.5" stroke="#bbb" stroke-width="1"/></svg>
<div class="a" style="left:969px;top:647px;width:1px;height:11px;background:#bbb"></div>
<div class="t" style="left:1093px;width:200px;text-align:center;top:647px;font-size:11.7px;color:#c0c0c0">Typing Text 01</div>
<svg style="left:1421px;top:648px" width="9" height="9"><path d="M0.5 0.5 L8.5 8.5 M8.5 0.5 L0.5 8.5" stroke="#bbb" stroke-width="1"/></svg>
<div class="a" style="left:1439px;top:643px;width:470px;height:20px;background:#474747;border-radius:3px 3px 0 0"></div>
<div class="t" style="left:1563px;width:200px;text-align:center;top:647px;font-size:11.7px;color:#e8e8e8">Typing Text 2</div>
<svg style="left:1891px;top:648px" width="9" height="9"><path d="M0.5 0.5 L8.5 8.5 M8.5 0.5 L0.5 8.5" stroke="#ccc" stroke-width="1"/></svg>
<div class="a" style="left:494px;top:663px;width:458px;height:42px;background:#3b3b3b"></div>
<div class="a" style="left:494px;top:663px;width:458px;height:22px;background:#333"></div>
<div class="a" style="left:496.3px;top:666px;width:247px;height:18.6px;background:#262626;border-radius:9.3px"></div>
<svg style="left:500px;top:668.5px" width="14" height="14"><circle cx="5.5" cy="5.5" r="4.9" fill="none" stroke="#ddd" stroke-width="1"/><path d="M9.6 9.6 L12 12" stroke="#ddd" stroke-width="2"/></svg>
<div class="t" style="left:520px;top:670.5px;font-size:11.5px;color:#8c8c8c">Enter a layer name</div>
<div class="a btn" style="left:746.6px;top:666px;width:18.7px;height:18.6px"></div>
<svg style="left:746.6px;top:666px" width="1" height="1"><path d="M9.3 4 V15 M3.8 9.5 H14.8" stroke="#eee" stroke-width="2"/><path d="M15 16.5 L17.5 14 V16.5Z" fill="#5ec8a0"/></svg>
<div class="a btn" style="left:790.4px;top:666px;width:19.1px;height:18.6px"></div>
<svg style="left:790.4px;top:666px" width="1" height="1"><circle cx="11.5" cy="6.5" r="4" fill="#ddd"/><path d="M4 11 A5 5 0 0 0 11 15 M3.5 8.5 A6 6 0 0 0 9 13.5" fill="none" stroke="#888" stroke-width="1.5"/></svg>
<div class="a btn" style="left:812.5px;top:666px;width:19.0px;height:18.6px"></div>
<svg style="left:812.5px;top:666px" width="1" height="1"><circle cx="5" cy="5" r="1.1" fill="#ddd"/><circle cx="11" cy="4.5" r="1.1" fill="#ddd"/><circle cx="5" cy="10" r="1.1" fill="#ddd"/><path d="M11.5 8 V15 M8 11.5 H15" stroke="#eee" stroke-width="1.5"/><path d="M15 16.5 L17.5 14 V16.5Z" fill="#5ec8a0"/></svg>
<div class="a btn" style="left:834.4px;top:666px;width:18.6px;height:18.6px"></div>
<svg style="left:834.4px;top:666px" width="1" height="1"><path d="M3 5 H7 M11 5 H16 M3 9.5 H10 M13.5 9.5 H16 M3 14 H6 M10 14 H16" stroke="#ddd" stroke-width="1.1"/><circle cx="9" cy="5" r="1.6" fill="none" stroke="#ddd"/><circle cx="11.8" cy="9.5" r="1.6" fill="none" stroke="#ddd"/><circle cx="8" cy="14" r="1.6" fill="none" stroke="#ddd"/><path d="M15 16.5 L17.5 14 V16.5Z" fill="#5ec8a0"/></svg>
<div class="a" style="left:856.5px;top:666px;width:93.5px;height:18.6px;background:#2b2b2b;border-radius:2px"></div>
<div class="t" style="left:863px;top:669.5px;font-size:11.7px;color:#555">F</div>
<div class="t" style="left:873px;top:669.5px;font-size:11.7px;color:#e8e8e8">20</div>
<svg style="left:504.7px;top:696px" width="1" height="1"><rect x="-4" y="-1" width="8" height="6.5" fill="#d0d0d0"/><path d="M-2.5 -1 V-3 A2.5 2.5 0 0 1 2.5 -3 V-1" fill="none" stroke="#d0d0d0" stroke-width="1.3"/><circle cx="0" cy="2" r="1" fill="#3b3b3b"/></svg>
<svg style="left:524px;top:696px" width="1" height="1"><path d="M-6.5 0 Q0 -5.5 6.5 0 Q0 5.5 -6.5 0Z" fill="none" stroke="#d0d0d0" stroke-width="1.1"/><circle cx="0" cy="0" r="2" fill="#d0d0d0"/></svg>
<svg style="left:543px;top:696px" width="1" height="1"><path d="M0 -6 L5.5 -3 V3.5 L0 6.5 L-5.5 3.5 V-3Z M-5.5 -3 L0 0 L5.5 -3 M0 0 V6.5" fill="none" stroke="#d0d0d0" stroke-width="1"/></svg>
<svg style="left:562px;top:696px" width="1" height="1"><path d="M-6 -2 H-3.5 L0 -5.5 V5.5 L-3.5 2 H-6Z" fill="#d0d0d0"/><path d="M2 -3 Q4 0 2 3 M4 -5 Q7 0 4 5" fill="none" stroke="#d0d0d0" stroke-width="1.1"/></svg>
<svg style="left:581px;top:696px" width="1" height="1"><path d="M-5.5 6 L1 -0.5" stroke="#d0d0d0" stroke-width="1.3"/><path d="M-0.5 -2.5 L2.5 0.5" stroke="#d0d0d0" stroke-width="1.8"/><circle cx="3" cy="-3" r="2.3" fill="#d0d0d0"/><path d="M1 -1 L3 -3" stroke="#d0d0d0" stroke-width="2.5"/></svg>
<svg style="left:600px;top:696px" width="1" height="1"><path d="M-3.5 -3.5 H7 V3.5 H-3.5 L-7 0Z" fill="#d0d0d0"/><circle cx="-3" cy="0" r="1.3" fill="#3b3b3b"/></svg>
<div class="t" style="left:649.4px;top:691px;font-size:11.7px;color:#e8e8e8">Name</div>
<div class="a" style="left:494px;top:705px;width:444px;height:132px;background:#363636"></div>
<div class="a" style="left:494px;top:837px;width:444px;height:139px;background:#2a2a2a"></div>
<div class="a" style="left:938px;top:705px;width:14px;height:271px;background:#2e2e2e"></div>
<div class="a" style="left:940px;top:706px;width:10px;height:255px;background:#4a4a4a;border-radius:5px"></div>
<div class="a" style="left:952px;top:663px;width:7px;height:313px;background:#1e1e1e"></div>
<svg style="left:954px;top:824px" width="2" height="14"><rect x="0" y="0" width="1.5" height="1" fill="#777"/><rect x="0" y="2" width="1.5" height="1" fill="#777"/><rect x="0" y="4" width="1.5" height="1" fill="#777"/><rect x="0" y="6" width="1.5" height="1" fill="#777"/><rect x="0" y="8" width="1.5" height="1" fill="#777"/><rect x="0" y="10" width="1.5" height="1" fill="#777"/><rect x="0" y="12" width="1.5" height="1" fill="#777"/></svg>
<div class="a" style="left:496px;top:707px;width:18px;height:18px;background:#2a2a2a;border-radius:2px"></div>
<div class="a" style="left:515px;top:707px;width:18px;height:18px;background:#2a2a2a;border-radius:2px"></div>
<div class="a" style="left:534px;top:707px;width:18px;height:18px;background:#2a2a2a;border-radius:2px"></div>
<svg style="left:524px;top:716px" width="1" height="1"><path d="M-6.5 0 Q0 -5.5 6.5 0 Q0 5.5 -6.5 0Z" fill="none" stroke="#d0d0d0" stroke-width="1.1"/><circle cx="0" cy="0" r="2" fill="#d0d0d0"/></svg>
<div class="a" style="left:573px;top:708px;width:16px;height:16px;background:#c89cf8;border-radius:2px"></div>
<svg style="left:600px;top:716px" width="1" height="1"><path d="M-3.5 -3.5 H7 V3.5 H-3.5 L-7 0Z" fill="#d0d0d0"/><circle cx="-3" cy="0" r="1.3" fill="#363636"/></svg>
<div class="a" style="left:610.5px;top:709px;width:15px;height:15px;background:#2e2e2e;border-radius:2px"></div>
<svg style="left:618.0px;top:716px" width="1" height="1"><path d="M-4 -1.8 L0 2 L4 -1.8" fill="none" stroke="#888" stroke-width="1"/></svg>
<div class="a" style="left:625.5px;top:709px;width:16.5px;height:15px;background:#2e2e2e;border-radius:2px"></div>
<svg style="left:647.5px;top:708.5px" width="17" height="17"><rect x="0" y="0" width="2.4" height="2.4" fill="#e0e0e0"/><rect x="13" y="0" width="2.4" height="2.4" fill="#e0e0e0"/><rect x="0" y="13" width="2.4" height="2.4" fill="#e0e0e0"/><rect x="13" y="13" width="2.4" height="2.4" fill="#e0e0e0"/><path d="M3 1.2 H12.5 M3 14.2 H12.5 M1.2 3 V12.5 M14.2 3 V12.5" stroke="#d8d8d8" stroke-width="1"/><path d="M4.3 4.8 H11 M7.7 4.8 V11.8" stroke="#f0e070" stroke-width="2.1"/></svg>
<div class="t" style="left:667.4px;top:710.5px;font-size:11.7px;color:#e8e8e8">Main</div>
<div class="a" style="left:898px;top:708.5px;width:20.5px;height:15px;background:#2b2b2b;border-radius:3px"></div>
<div class="a" style="left:908px;top:708.5px;width:1px;height:15px;background:#232323"></div>
<svg style="left:898px;top:716px" width="1" height="1"><path d="M2.2 0 L5.2 -3.6 H8.6 V3.6 H5.2Z" fill="#e0c060"/><path d="M13 -3.6 H16.3 L19.3 0 L16.3 3.6 H13Z" fill="#777"/></svg>
<svg style="left:928.7px;top:716px" width="1" height="1"><circle r="4.3" fill="none" stroke="#888" stroke-width="1"/></svg>
<div class="a" style="left:496px;top:729px;width:18px;height:18px;background:#2a2a2a;border-radius:2px"></div>
<div class="a" style="left:515px;top:729px;width:18px;height:18px;background:#2a2a2a;border-radius:2px"></div>
<svg style="left:524px;top:738px" width="1" height="1"><circle r="5" fill="none" stroke="#d0d0d0" stroke-width="1.1"/><path d="M-2.5 0 L-0.5 2.2 L5 -3.5" fill="none" stroke="#d0d0d0" stroke-width="1.3"/></svg>
<div class="a" style="left:573px;top:730px;width:16px;height:16px;background:#5f8fe8;border-radius:2px"></div>
<svg style="left:600px;top:738px" width="1" height="1"><path d="M-3.5 -3.5 H7 V3.5 H-3.5 L-7 0Z" fill="#d0d0d0"/><circle cx="-3" cy="0" r="1.3" fill="#363636"/></svg>
<div class="a" style="left:629.7px;top:731px;width:14.5px;height:15px;background:#2e2e2e;border-radius:2px"></div>
<svg style="left:636.95px;top:738px" width="1" height="1"><path d="M-4 -1.8 L0 2 L4 -1.8" fill="none" stroke="#888" stroke-width="1"/></svg>
<div class="a" style="left:644px;top:731px;width:16px;height:15px;background:#2e2e2e;border-radius:2px"></div>
<svg style="left:652.0px;top:738px" width="1" height="1"><circle r="2.8" fill="#ddd"/></svg>
<svg style="left:673px;top:738px" width="1" height="1"><path d="M-7 -2 A7.5 7.5 0 0 1 7 -2 M-7 2.5 A7.5 7.5 0 0 0 7 2.5" fill="none" stroke="#ccc" stroke-width="1"/><text x="0" y="1.5" text-anchor="middle" font-size="7.5" fill="#8ccff8" font-family="Liberation Sans">abc</text><path d="M-6 2.5 H6" stroke="#8ccff8" stroke-width="0.8"/></svg>
<div class="t" style="left:686px;top:732.5px;font-size:11.8px;color:#e8e8e8">String Manipulator [Cavalry Typing Te...</div>
<div class="a" style="left:898px;top:730.5px;width:20.5px;height:15px;background:#2b2b2b;border-radius:3px"></div>
<div class="a" style="left:908px;top:730.5px;width:1px;height:15px;background:#232323"></div>
<svg style="left:898px;top:738px" width="1" height="1"><path d="M2.2 0 L5.2 -3.6 H8.6 V3.6 H5.2Z" fill="#777"/><path d="M13 -3.6 H16.3 L19.3 0 L16.3 3.6 H13Z" fill="#c850e8"/></svg>
<svg style="left:928.7px;top:738px" width="1" height="1"><circle r="4.3" fill="none" stroke="#888" stroke-width="1"/></svg>
<svg style="left:653px;top:749px" width="12" height="12"><path d="M0.5 0 V10.5 H10" fill="none" stroke="#ccc" stroke-width="1" stroke-dasharray="1 1"/></svg>
<div class="t" style="left:666px;top:754.5px;font-size:11.5px;color:#e8e8e8">Resize String.Percentage</div>
<div class="a" style="left:840px;top:752px;width:94px;height:16.2px;background:#3a3a3a;border-radius:2px"></div>
<div class="a" style="left:840px;top:752px;width:84px;height:16.2px;background:#262626;border-radius:2px"></div>
<div class="t" style="left:843.6px;top:754.5px;font-size:11.7px;color:#777">%</div>
<div class="t" style="left:857.4px;top:754.5px;font-size:11.7px;color:#e8e8e8">33.333</div>
<svg style="left:915.8px;top:760px" width="1" height="1"><path d="M0 -4 L4 0 L0 4 L-4 0Z" fill="#d8d8d8"/></svg>
<svg style="left:927px;top:760px" width="1" height="1"><path d="M0 -3.5 H1.5 L5 0 L1.5 3.5 H0Z" fill="#888"/></svg>
<div class="a" style="left:496px;top:773px;width:18px;height:18px;background:#2a2a2a;border-radius:2px"></div>
<div class="a" style="left:515px;top:773px;width:18px;height:18px;background:#2a2a2a;border-radius:2px"></div>
<div class="a" style="left:534px;top:773px;width:18px;height:18px;background:#2a2a2a;border-radius:2px"></div>
<div class="a" style="left:573px;top:774px;width:16px;height:16px;background:#c89cf8;border-radius:2px"></div>
<svg style="left:600px;top:782px" width="1" height="1"><path d="M-3.5 -3.5 H7 V3.5 H-3.5 L-7 0Z" fill="#d0d0d0"/><circle cx="-3" cy="0" r="1.3" fill="#363636"/></svg>
<div class="a" style="left:629.7px;top:775px;width:14.5px;height:15px;background:#2e2e2e;border-radius:2px"></div>
<svg style="left:636.95px;top:782px" width="1" height="1"><path d="M-4 -1.8 L0 2 L4 -1.8" fill="none" stroke="#888" stroke-width="1"/></svg>
<div class="a" style="left:644px;top:775px;width:16px;height:15px;background:#2e2e2e;border-radius:2px"></div>
<svg style="left:666.5px;top:774.5px" width="17" height="17"><rect x="0" y="0" width="2.4" height="2.4" fill="#e0e0e0"/><rect x="13" y="0" width="2.4" height="2.4" fill="#e0e0e0"/><rect x="0" y="13" width="2.4" height="2.4" fill="#e0e0e0"/><rect x="13" y="13" width="2.4" height="2.4" fill="#e0e0e0"/><path d="M3 1.2 H12.5 M3 14.2 H12.5 M1.2 3 V12.5 M14.2 3 V12.5" stroke="#d8d8d8" stroke-width="1"/><path d="M4.3 4.8 H11 M7.7 4.8 V11.8" stroke="#f0e070" stroke-width="2.1"/></svg>
<div class="t" style="left:686px;top:776.5px;font-size:11.7px;color:#9a9a9a">Cavalry Typing Text</div>
<div class="a" style="left:898px;top:774.5px;width:20.5px;height:15px;background:#2b2b2b;border-radius:3px"></div>
<div class="a" style="left:908px;top:774.5px;width:1px;height:15px;background:#232323"></div>
<svg style="left:898px;top:782px" width="1" height="1"><path d="M2.2 0 L5.2 -3.6 H8.6 V3.6 H5.2Z" fill="#e0c060"/><path d="M13 -3.6 H16.3 L19.3 0 L16.3 3.6 H13Z" fill="#c850e8"/></svg>
<svg style="left:928.7px;top:782px" width="1" height="1"><circle r="4.3" fill="none" stroke="#888" stroke-width="1"/></svg>
<div class="a" style="left:496px;top:795px;width:18px;height:18px;background:#2a2a2a;border-radius:2px"></div>
<div class="a" style="left:515px;top:795px;width:18px;height:18px;background:#2a2a2a;border-radius:2px"></div>
<div class="a" style="left:534px;top:795px;width:18px;height:18px;background:#2a2a2a;border-radius:2px"></div>
<div class="a" style="left:573px;top:796px;width:16px;height:16px;background:#c89cf8;border-radius:2px"></div>
<svg style="left:600px;top:804px" width="1" height="1"><path d="M-3.5 -3.5 H7 V3.5 H-3.5 L-7 0Z" fill="#d0d0d0"/><circle cx="-3" cy="0" r="1.3" fill="#363636"/></svg>
<div class="a" style="left:649px;top:797px;width:14.5px;height:15px;background:#2e2e2e;border-radius:2px"></div>
<svg style="left:656.25px;top:804px" width="1" height="1"><path d="M-4 -1.8 L0 2 L4 -1.8" fill="none" stroke="#888" stroke-width="1"/></svg>
<div class="a" style="left:663px;top:797px;width:16px;height:15px;background:#2e2e2e;border-radius:2px"></div>
<svg style="left:671.0px;top:804px" width="1" height="1"><circle r="2.8" fill="#ddd"/></svg>
<svg style="left:685.5px;top:796.5px" width="17" height="17"><rect x="0" y="0" width="2.4" height="2.4" fill="#e0e0e0"/><rect x="13" y="0" width="2.4" height="2.4" fill="#e0e0e0"/><rect x="0" y="13" width="2.4" height="2.4" fill="#e0e0e0"/><rect x="13" y="13" width="2.4" height="2.4" fill="#e0e0e0"/><path d="M3 1.2 H12.5 M3 14.2 H12.5 M1.2 3 V12.5 M14.2 3 V12.5" stroke="#d8d8d8" stroke-width="1"/><path d="M4.3 4.8 H11 M7.7 4.8 V11.8" stroke="#f0e070" stroke-width="2.1"/></svg>
<div class="t" style="left:705px;top:798.5px;font-size:11.7px;color:#9a9a9a">Cursor</div>
<div class="a" style="left:898px;top:796.5px;width:20.5px;height:15px;background:#2b2b2b;border-radius:3px"></div>
<div class="a" style="left:908px;top:796.5px;width:1px;height:15px;background:#232323"></div>
<svg style="left:898px;top:804px" width="1" height="1"><path d="M2.2 0 L5.2 -3.6 H8.6 V3.6 H5.2Z" fill="#777"/><path d="M13 -3.6 H16.3 L19.3 0 L16.3 3.6 H13Z" fill="#c850e8"/></svg>
<svg style="left:928.7px;top:804px" width="1" height="1"><circle r="4.3" fill="none" stroke="#888" stroke-width="1"/></svg>
<svg style="left:672px;top:815px" width="12" height="12"><path d="M0.5 0 V10.5 H10" fill="none" stroke="#ccc" stroke-width="1" stroke-dasharray="1 1"/></svg>
<div class="t" style="left:685px;top:820.5px;font-size:11.7px;color:#e8e8e8">Fill.Alpha</div>
<div class="a" style="left:840px;top:818px;width:94px;height:16.2px;background:#3a3a3a;border-radius:2px"></div>
<div class="a" style="left:840px;top:818px;width:84px;height:16.2px;background:#262626;border-radius:2px"></div>
<div class="t" style="left:843.6px;top:820.5px;font-size:11.7px;color:#777">%</div>
<div class="t" style="left:857.4px;top:820.5px;font-size:11.7px;color:#e8e8e8">0.0</div>
<svg style="left:915.8px;top:826px" width="1" height="1"><path d="M0 -4 L4 0 L0 4 L-4 0Z" fill="#3ad16a"/></svg>
<svg style="left:927px;top:826px" width="1" height="1"><path d="M0 -3.5 H1.5 L5 0 L1.5 3.5 H0Z" fill="#888"/></svg>
<div class="a" style="left:494px;top:961px;width:458px;height:15px;background:#2a2a2a"></div>
<div class="a" style="left:495px;top:963.8px;width:442px;height:9.8px;background:#474747;border-radius:5px"></div>
<div class="a" style="left:494px;top:976px;width:458px;height:22px;background:#3b3b3b"></div>
<div class="a" style="left:494px;top:998px;width:1420px;height:5px;background:#1b1b1b"></div>
<div class="a btn" style="left:498px;top:978px;width:19.0px;height:18.0px"></div>
<svg style="left:498px;top:978px" width="1" height="1"><path d="M6 5.5 H16 V12.5 H6 L2.5 9Z" fill="#ddd"/><circle cx="6.5" cy="9" r="1.5" fill="#2b2b2b"/></svg>
<div class="a btn" style="left:743.4px;top:978px;width:19.1px;height:18.0px"></div>
<svg style="left:743.4px;top:978px" width="1" height="1"><rect x="3.5" y="3" width="12" height="12" fill="none" stroke="#ddd" stroke-width="1.3"/><rect x="8" y="7.5" width="3" height="3" fill="#ddd"/></svg>
<div class="a" style="left:766px;top:978px;width:90px;height:18px;background:#555;border-radius:3px"></div>
<svg style="left:773px;top:981px" width="14" height="12"><rect x="2" y="0.5" width="11" height="1.6" fill="#ddd"/><rect x="0" y="5" width="11" height="1.6" fill="#ddd"/><rect x="2" y="9.5" width="11" height="1.6" fill="#ddd"/></svg>
<div class="t" style="left:790px;top:982px;font-size:11.7px;color:#e8e8e8">Time Editor</div>
<div class="a" style="left:856px;top:978px;width:92px;height:18px;background:#2b2b2b;border-radius:3px;border:1px solid #444"></div>
<svg style="left:862px;top:980px" width="13" height="13"><path d="M1 0 V12 H13" fill="none" stroke="#3ad16a" stroke-width="1.1"/><path d="M2 10 L6 6 L8 8 L12 3" fill="none" stroke="#3ad16a" stroke-width="1.1"/></svg>
<div class="t" style="left:878px;top:982px;font-size:11.9px;color:#f0f0f0">Graph Editor</div>
<div class="a" style="left:847px;top:971px;width:109px;height:31px;border:3px solid #c2f21a"></div><div class="a" style="left:959px;top:663px;width:955px;height:24px;background:#262626"></div>
<div class="a" style="left:959px;top:687px;width:955px;height:17px;background:#1f1f1f"></div>
<div class="a" style="left:1684.1px;top:687px;width:229.9px;height:18px;background:#262626"></div>
<div class="a" style="left:1082.0px;top:687.6px;width:602.1px;height:15.2px;background:#474747"></div>
<div class="a" style="left:959px;top:704px;width:955px;height:272px;background:#202020"></div>
<svg style="left:0;top:0" width="1920" height="1030"><rect x="1082" y="679" width="1" height="8" fill="#6a6a6a"/><rect x="1092" y="683" width="1" height="4" fill="#5a5a5a"/><rect x="1102" y="683" width="1" height="4" fill="#5a5a5a"/><rect x="1112" y="683" width="1" height="4" fill="#5a5a5a"/><rect x="1122" y="683" width="1" height="4" fill="#5a5a5a"/><rect x="1132" y="679" width="1" height="8" fill="#6a6a6a"/><rect x="1142" y="683" width="1" height="4" fill="#5a5a5a"/><rect x="1152" y="683" width="1" height="4" fill="#5a5a5a"/><rect x="1162" y="683" width="1" height="4" fill="#5a5a5a"/><rect x="1172" y="683" width="1" height="4" fill="#5a5a5a"/><rect x="1182" y="679" width="1" height="8" fill="#6a6a6a"/><rect x="1192" y="683" width="1" height="4" fill="#5a5a5a"/><rect x="1202" y="683" width="1" height="4" fill="#5a5a5a"/><rect x="1212" y="683" width="1" height="4" fill="#5a5a5a"/><rect x="1222" y="683" width="1" height="4" fill="#5a5a5a"/><rect x="1232" y="679" width="1" height="8" fill="#6a6a6a"/><rect x="1242" y="683" width="1" height="4" fill="#5a5a5a"/><rect x="1252" y="683" width="1" height="4" fill="#5a5a5a"/><rect x="1262" y="683" width="1" height="4" fill="#5a5a5a"/><rect x="1272" y="683" width="1" height="4" fill="#5a5a5a"/><rect x="1282" y="679" width="1" height="8" fill="#6a6a6a"/><rect x="1292" y="683" width="1" height="4" fill="#5a5a5a"/><rect x="1302" y="683" width="1" height="4" fill="#5a5a5a"/><rect x="1312" y="683" width="1" height="4" fill="#5a5a5a"/><rect x="1322" y="683" width="1" height="4" fill="#5a5a5a"/><rect x="1332" y="679" width="1" height="8" fill="#6a6a6a"/><rect x="1342" y="683" width="1" height="4" fill="#5a5a5a"/><rect x="1352" y="683" width="1" height="4" fill="#5a5a5a"/><rect x="1362" y="683" width="1" height="4" fill="#5a5a5a"/><rect x="1373" y="683" width="1" height="4" fill="#5a5a5a"/><rect x="1383" y="679" width="1" height="8" fill="#6a6a6a"/><rect x="1393" y="683" width="1" height="4" fill="#5a5a5a"/><rect x="1403" y="683" width="1" height="4" fill="#5a5a5a"/><rect x="1413" y="683" width="1" height="4" fill="#5a5a5a"/><rect x="1423" y="683" width="1" height="4" fill="#5a5a5a"/><rect x="1433" y="679" width="1" height="8" fill="#6a6a6a"/><rect x="1443" y="683" width="1" height="4" fill="#5a5a5a"/><rect x="1453" y="683" width="1" height="4" fill="#5a5a5a"/><rect x="1463" y="683" width="1" height="4" fill="#5a5a5a"/><rect x="1473" y="683" width="1" height="4" fill="#5a5a5a"/><rect x="1483" y="679" width="1" height="8" fill="#6a6a6a"/><rect x="1493" y="683" width="1" height="4" fill="#5a5a5a"/><rect x="1503" y="683" width="1" height="4" fill="#5a5a5a"/><rect x="1513" y="683" width="1" height="4" fill="#5a5a5a"/><rect x="1523" y="683" width="1" height="4" fill="#5a5a5a"/><rect x="1533" y="679" width="1" height="8" fill="#6a6a6a"/><rect x="1543" y="683" width="1" height="4" fill="#5a5a5a"/><rect x="1553" y="683" width="1" height="4" fill="#5a5a5a"/><rect x="1563" y="683" width="1" height="4" fill="#5a5a5a"/><rect x="1573" y="683" width="1" height="4" fill="#5a5a5a"/><rect x="1583" y="679" width="1" height="8" fill="#6a6a6a"/><rect x="1593" y="683" width="1" height="4" fill="#5a5a5a"/><rect x="1603" y="683" width="1" height="4" fill="#5a5a5a"/><rect x="1613" y="683" width="1" height="4" fill="#5a5a5a"/><rect x="1623" y="683" width="1" height="4" fill="#5a5a5a"/><rect x="1633" y="679" width="1" height="8" fill="#6a6a6a"/><rect x="1643" y="683" width="1" height="4" fill="#5a5a5a"/><rect x="1653" y="683" width="1" height="4" fill="#5a5a5a"/><rect x="1664" y="683" width="1" height="4" fill="#5a5a5a"/><rect x="1674" y="683" width="1" height="4" fill="#5a5a5a"/><rect x="1684" y="679" width="1" height="8" fill="#6a6a6a"/><rect x="1694" y="683" width="1" height="4" fill="#5a5a5a"/><rect x="1704" y="683" width="1" height="4" fill="#5a5a5a"/><rect x="1714" y="683" width="1" height="4" fill="#5a5a5a"/><rect x="1724" y="683" width="1" height="4" fill="#5a5a5a"/><rect x="1734" y="679" width="1" height="8" fill="#6a6a6a"/><rect x="1744" y="683" width="1" height="4" fill="#5a5a5a"/><rect x="1754" y="683" width="1" height="4" fill="#5a5a5a"/><rect x="1764" y="683" width="1" height="4" fill="#5a5a5a"/><rect x="1774" y="683" width="1" height="4" fill="#5a5a5a"/><rect x="1784" y="679" width="1" height="8" fill="#6a6a6a"/><rect x="1794" y="683" width="1" height="4" fill="#5a5a5a"/><rect x="1804" y="683" width="1" height="4" fill="#5a5a5a"/><rect x="1814" y="683" width="1" height="4" fill="#5a5a5a"/><rect x="1824" y="683" width="1" height="4" fill="#5a5a5a"/><rect x="1834" y="679" width="1" height="8" fill="#6a6a6a"/><rect x="1844" y="683" width="1" height="4" fill="#5a5a5a"/><rect x="1854" y="683" width="1" height="4" fill="#5a5a5a"/><rect x="1864" y="683" width="1" height="4" fill="#5a5a5a"/><rect x="1874" y="683" width="1" height="4" fill="#5a5a5a"/><rect x="1884" y="679" width="1" height="8" fill="#6a6a6a"/><rect x="1894" y="683" width="1" height="4" fill="#5a5a5a"/><rect x="1904" y="683" width="1" height="4" fill="#5a5a5a"/><rect x="981" y="705" width="1" height="268" fill="#353535"/><rect x="1031" y="705" width="1" height="268" fill="#353535"/><rect x="1082" y="705" width="1" height="268" fill="#353535"/><rect x="1132" y="705" width="1" height="268" fill="#353535"/><rect x="1182" y="705" width="1" height="268" fill="#353535"/><rect x="1232" y="705" width="1" height="268" fill="#353535"/><rect x="1282" y="705" width="1" height="268" fill="#353535"/><rect x="1332" y="705" width="1" height="268" fill="#353535"/><rect x="1383" y="705" width="1" height="268" fill="#353535"/><rect x="1433" y="705" width="1" height="268" fill="#353535"/><rect x="1483" y="705" width="1" height="268" fill="#353535"/><rect x="1533" y="705" width="1" height="268" fill="#353535"/><rect x="1583" y="705" width="1" height="268" fill="#353535"/><rect x="1633" y="705" width="1" height="268" fill="#353535"/><rect x="1684" y="705" width="1" height="268" fill="#353535"/><rect x="1734" y="705" width="1" height="268" fill="#353535"/><rect x="1784" y="705" width="1" height="268" fill="#353535"/><rect x="1834" y="705" width="1" height="268" fill="#353535"/><rect x="1884" y="705" width="1" height="268" fill="#353535"/><rect x="959" y="714.7" width="955" height="1" fill="#353535"/><rect x="1905" y="714.7" width="8" height="1" fill="#555"/><rect x="959" y="740.6" width="955" height="1" fill="#353535"/><rect x="1905" y="740.6" width="8" height="1" fill="#555"/><rect x="959" y="766.4" width="955" height="1" fill="#353535"/><rect x="1905" y="766.4" width="8" height="1" fill="#555"/><rect x="959" y="792.3" width="955" height="1" fill="#353535"/><rect x="1905" y="792.3" width="8" height="1" fill="#555"/><rect x="959" y="818.2" width="955" height="1" fill="#353535"/><rect x="1905" y="818.2" width="8" height="1" fill="#555"/><rect x="959" y="844.1" width="955" height="1" fill="#353535"/><rect x="1905" y="844.1" width="8" height="1" fill="#555"/><rect x="959" y="869.9" width="955" height="1" fill="#353535"/><rect x="1905" y="869.9" width="8" height="1" fill="#555"/><rect x="959" y="895.8" width="955" height="1" fill="#353535"/><rect x="1905" y="895.8" width="8" height="1" fill="#555"/><rect x="959" y="921.7" width="955" height="1" fill="#353535"/><rect x="1905" y="921.7" width="8" height="1" fill="#555"/><rect x="959" y="947.5" width="955" height="1" fill="#353535"/><rect x="1905" y="947.5" width="8" height="1" fill="#555"/><rect x="959" y="972.5" width="955" height="1" fill="#353535"/></svg>
<div class="t" style="left:1056.0px;width:50px;text-align:center;top:665.5px;font-size:11.7px;color:#e0e0e0">0</div>
<div class="t" style="left:1106.2px;width:50px;text-align:center;top:665.5px;font-size:11.7px;color:#e0e0e0">10</div>
<div class="t" style="left:1156.3px;width:50px;text-align:center;top:665.5px;font-size:11.7px;color:#e0e0e0">20</div>
<div class="t" style="left:1206.5px;width:50px;text-align:center;top:665.5px;font-size:11.7px;color:#e0e0e0">30</div>
<div class="t" style="left:1256.7px;width:50px;text-align:center;top:665.5px;font-size:11.7px;color:#e0e0e0">40</div>
<div class="t" style="left:1306.9px;width:50px;text-align:center;top:665.5px;font-size:11.7px;color:#e0e0e0">50</div>
<div class="t" style="left:1357.0px;width:50px;text-align:center;top:665.5px;font-size:11.7px;color:#e0e0e0">60</div>
<div class="t" style="left:1407.2px;width:50px;text-align:center;top:665.5px;font-size:11.7px;color:#e0e0e0">70</div>
<div class="t" style="left:1457.4px;width:50px;text-align:center;top:665.5px;font-size:11.7px;color:#e0e0e0">80</div>
<div class="t" style="left:1507.6px;width:50px;text-align:center;top:665.5px;font-size:11.7px;color:#e0e0e0">90</div>
<div class="t" style="left:1557.7px;width:50px;text-align:center;top:665.5px;font-size:11.7px;color:#e0e0e0">100</div>
<div class="t" style="left:1607.9px;width:50px;text-align:center;top:665.5px;font-size:11.7px;color:#e0e0e0">110</div>
<div class="t" style="left:1658.1px;width:50px;text-align:center;top:665.5px;font-size:11.7px;color:#e0e0e0">120</div>
<div class="t" style="left:1708.2px;width:50px;text-align:center;top:665.5px;font-size:11.7px;color:#e0e0e0">130</div>
<div class="t" style="left:1758.4px;width:50px;text-align:center;top:665.5px;font-size:11.7px;color:#e0e0e0">140</div>
<div class="t" style="left:1808.6px;width:50px;text-align:center;top:665.5px;font-size:11.7px;color:#e0e0e0">150</div>
<div class="t" style="left:1858.8px;width:50px;text-align:center;top:665.5px;font-size:11.7px;color:#e0e0e0">160</div>
<div class="t" style="left:1855px;width:53px;text-align:right;top:709.7px;font-size:11.5px;color:#6a6a6a">120</div>
<div class="t" style="left:1855px;width:53px;text-align:right;top:735.6px;font-size:11.5px;color:#6a6a6a">105</div>
<div class="t" style="left:1855px;width:53px;text-align:right;top:761.4px;font-size:11.5px;color:#6a6a6a">90</div>
<div class="t" style="left:1855px;width:53px;text-align:right;top:787.3px;font-size:11.5px;color:#6a6a6a">75</div>
<div class="t" style="left:1855px;width:53px;text-align:right;top:813.2px;font-size:11.5px;color:#6a6a6a">60</div>
<div class="t" style="left:1855px;width:53px;text-align:right;top:839.1px;font-size:11.5px;color:#6a6a6a">45</div>
<div class="t" style="left:1855px;width:53px;text-align:right;top:864.9px;font-size:11.5px;color:#6a6a6a">30</div>
<div class="t" style="left:1855px;width:53px;text-align:right;top:890.8px;font-size:11.5px;color:#6a6a6a">15</div>
<div class="t" style="left:1855px;width:53px;text-align:right;top:916.7px;font-size:11.5px;color:#6a6a6a">0</div>
<div class="t" style="left:1855px;width:53px;text-align:right;top:942.5px;font-size:11.5px;color:#6a6a6a">-15</div>
<div class="t" style="left:956.7px;width:50px;text-align:center;top:957.5px;font-size:11.7px;color:#585858">-20</div>
<div class="t" style="left:1006.8px;width:50px;text-align:center;top:957.5px;font-size:11.7px;color:#585858">-10</div>
<div class="t" style="left:1057.0px;width:50px;text-align:center;top:957.5px;font-size:11.7px;color:#585858">0</div>
<div class="t" style="left:1107.2px;width:50px;text-align:center;top:957.5px;font-size:11.7px;color:#585858">10</div>
<div class="t" style="left:1157.3px;width:50px;text-align:center;top:957.5px;font-size:11.7px;color:#585858">20</div>
<div class="t" style="left:1207.5px;width:50px;text-align:center;top:957.5px;font-size:11.7px;color:#585858">30</div>
<div class="t" style="left:1257.7px;width:50px;text-align:center;top:957.5px;font-size:11.7px;color:#585858">40</div>
<div class="t" style="left:1307.9px;width:50px;text-align:center;top:957.5px;font-size:11.7px;color:#585858">50</div>
<div class="t" style="left:1358.0px;width:50px;text-align:center;top:957.5px;font-size:11.7px;color:#585858">60</div>
<div class="t" style="left:1408.2px;width:50px;text-align:center;top:957.5px;font-size:11.7px;color:#585858">70</div>
<div class="t" style="left:1458.4px;width:50px;text-align:center;top:957.5px;font-size:11.7px;color:#585858">80</div>
<div class="t" style="left:1508.6px;width:50px;text-align:center;top:957.5px;font-size:11.7px;color:#585858">90</div>
<div class="t" style="left:1558.7px;width:50px;text-align:center;top:957.5px;font-size:11.7px;color:#585858">100</div>
<div class="t" style="left:1608.9px;width:50px;text-align:center;top:957.5px;font-size:11.7px;color:#585858">110</div>
<div class="t" style="left:1659.1px;width:50px;text-align:center;top:957.5px;font-size:11.7px;color:#585858">120</div>
<div class="t" style="left:1709.2px;width:50px;text-align:center;top:957.5px;font-size:11.7px;color:#585858">130</div>
<div class="t" style="left:1759.4px;width:50px;text-align:center;top:957.5px;font-size:11.7px;color:#585858">140</div>
<div class="t" style="left:1809.6px;width:50px;text-align:center;top:957.5px;font-size:11.7px;color:#585858">150</div>
<div class="t" style="left:1859.8px;width:50px;text-align:center;top:957.5px;font-size:11.7px;color:#585858">160</div>
<div class="a" style="left:1077.0px;top:686px;width:5px;height:18px;background:#7bcfb0;border-radius:1px"></div>
<div class="a" style="left:1684.1px;top:686px;width:5px;height:18px;background:#7bcfb0;border-radius:1px"></div>
<div class="a" style="left:1181.8px;top:684px;width:1.2px;height:289px;background:#6fcf9f"></div>
<svg style="left:1182.3px;top:677px" width="1" height="1"><path d="M-7 0 H7 L0 8Z" fill="#6fcf9f"/></svg>
<svg style="left:0;top:0" width="1920" height="1030"><path d="M1082 922 L1132 750 L1182 922" fill="none" stroke="#a98ce8" stroke-width="1.2"/><path d="M1082 917.5 L1086.5 922 L1082 926.5 L1077.5 922Z M1132 745.5 L1136.5 750 L1132 754.5 L1127.5 750Z M1182 917.5 L1186.5 922 L1182 926.5 L1177.5 922Z" fill="#3ad16a"/><rect x="1048.8" y="734.5" width="160" height="204.5" fill="none" stroke="#c2f21a" stroke-width="3"/></svg>
<div class="t" style="left:962px;top:911.5px;font-size:11.7px;color:#b48af0">Fill.Alpha</div>
<svg style="left:955px;top:826px" width="2" height="14"><rect x="0" y="0" width="1.5" height="1" fill="#777"/><rect x="0" y="2" width="1.5" height="1" fill="#777"/><rect x="0" y="4" width="1.5" height="1" fill="#777"/><rect x="0" y="6" width="1.5" height="1" fill="#777"/><rect x="0" y="8" width="1.5" height="1" fill="#777"/><rect x="0" y="10" width="1.5" height="1" fill="#777"/></svg>
<div class="a" style="left:959px;top:976px;width:955px;height:22px;background:#3b3b3b"></div>
<div class="a btn" style="left:962.8px;top:978.3px;width:16.6px;height:18.4px;"></div>
<svg style="left:962.8px;top:978.3px" width="1" height="1"><rect x="2.5" y="3" width="11" height="1.5" fill="#ddd"/><rect x="2.5" y="7.5" width="2" height="1.5" fill="#ddd"/><rect x="6" y="7.5" width="7.5" height="1.5" fill="#ddd"/><rect x="2.5" y="12" width="4" height="1.5" fill="#ddd"/><rect x="9" y="12" width="2" height="1.5" fill="#ddd"/><path d="M13.5 16.5 L16 14 V16.5Z" fill="#5ec8a0"/></svg>
<div class="a" style="left:983.2px;top:978.3px;width:149.3px;height:18.4px;background:#2b2b2b;border-radius:3px"></div>
<div class="t" style="left:985px;top:982px;font-size:11.8px;color:#e8e8e8">Default Keyframe Layer</div>
<div class="a" style="left:1138.9px;top:978.3px;width:69.4px;height:18.4px;background:#2b2b2b;border-radius:3px"></div>
<div class="t" style="left:1145px;top:982px;font-size:11.7px;color:#555">F</div><div class="t" style="left:1157px;top:982px;font-size:11.7px;color:#ddd">-</div>
<div class="a" style="left:1212.4px;top:978.3px;width:69.4px;height:18.4px;background:#2b2b2b;border-radius:3px"></div>
<div class="t" style="left:1219px;top:982px;font-size:11.7px;color:#555">V</div><div class="t" style="left:1230px;top:982px;font-size:11.7px;color:#ddd">-</div>
<div class="a btn" style="left:1288.2px;top:978.3px;width:17.8px;height:18.4px;"></div>
<svg style="left:1288.2px;top:978.3px" width="1" height="1"><path d="M3 6 V3 H6 M12 3 H15 V6 M3 12 V15 H6 M15 12 V15 H12" fill="none" stroke="#ddd" stroke-width="1.5"/><rect x="8" y="8" width="2" height="2" fill="#ddd"/></svg>
<div class="a btn" style="left:1309.5px;top:978.3px;width:17.5px;height:18.4px;"></div>
<svg style="left:1309.5px;top:978.3px" width="1" height="1"><path d="M4 8 A3.5 3.5 0 0 1 11 6" fill="none" stroke="#ddd" stroke-width="2"/><path d="M8 9 V16 M12 9 V16 M6 11 H14 M6 14 H14" stroke="#3ad16a" stroke-width="1.2"/></svg>
<div class="a btn" style="left:1330px;top:978.3px;width:18.0px;height:18.4px;"></div>
<svg style="left:1330px;top:978.3px" width="1" height="1"><path d="M4.5 15 V8 A4.5 4.5 0 0 1 13.5 8 V15 L11.5 13.5 L9 15 L6.5 13.5Z" fill="#3ad16a"/><circle cx="7.3" cy="8.5" r="1.1" fill="#2b2b2b"/><circle cx="10.7" cy="8.5" r="1.1" fill="#2b2b2b"/></svg>
<div class="a btn" style="left:1351.5px;top:978.3px;width:17.5px;height:18.4px;"></div>
<svg style="left:1351.5px;top:978.3px" width="1" height="1"><path d="M4 4 H14 M9 4 V15" stroke="#3ad16a" stroke-width="2.2"/></svg>
<div class="a btn" style="left:1372.5px;top:978.3px;width:30.5px;height:18.4px;"></div>
<svg style="left:1372.5px;top:978.3px" width="1" height="1"><path d="M2 9 H14 M5 6 V12 M8 4 V14 M11 6 V12" stroke="#ddd" stroke-width="1"/><rect x="18" y="1" width="1" height="16" fill="#232323"/><path d="M22 5.5 L26.5 9 L22 12.5Z" fill="none" stroke="#888" stroke-width="0.9"/></svg>
<div class="t" style="left:1410.7px;top:982px;font-size:11.7px;color:#e8e8e8">Looping:</div>
<div class="a btn" style="left:1458px;top:978.3px;width:17.9px;height:18.4px;"></div>
<svg style="left:1458px;top:978.3px" width="1" height="1"><path d="M3 14 C6 14 5 4 9 4 M8 14 C11 14 10 4 14 4" fill="none" stroke="#ccc" stroke-width="1"/><path d="M8 14 C11 14 10 4 14 4" fill="none" stroke="#5ec8a0" stroke-width="1"/></svg>
<div class="a btn" style="left:1475.9px;top:978.3px;width:17.9px;height:18.4px;"></div>
<svg style="left:1475.9px;top:978.3px" width="1" height="1"><path d="M3 14 C8 14 9 4 15 4" fill="none" stroke="#5ec8a0" stroke-width="1.1"/></svg>
<div class="t" style="left:1537.2px;top:982px;font-size:11.7px;color:#e8e8e8">Interpolation:</div>
<div class="a btn" style="left:1613px;top:978.3px;width:18.0px;height:18.4px;"></div>
<svg style="left:1613px;top:978.3px" width="1" height="1"><path d="M3 13 L9 6 L15 13" fill="none" stroke="#ccc" stroke-width="0.8" stroke-dasharray="1 1"/><circle cx="9" cy="6" r="1.5" fill="#5ec8a0"/></svg>
<div class="a btn" style="left:1631px;top:978.3px;width:18.0px;height:18.4px;"></div>
<svg style="left:1631px;top:978.3px" width="1" height="1"><path d="M2 7 L5 10 L9 6 L13 10 L16 7" fill="none" stroke="#ccc" stroke-width="0.8" stroke-dasharray="1 1"/><circle cx="9" cy="6.5" r="1.5" fill="#5ec8a0"/></svg>
<div class="t" style="left:1692.4px;top:982px;font-size:11.7px;color:#e8e8e8">Béziers:</div>
<div class="a btn" style="left:1737.5px;top:978.3px;width:17.5px;height:18.4px;"></div>
<svg style="left:1737.5px;top:978.3px" width="1" height="1"><path d="M3 4 L9 10 L15 4" fill="none" stroke="#ccc" stroke-width="1"/><circle cx="9" cy="10" r="1.8" fill="#5ec8a0"/></svg>
<div class="a btn" style="left:1755px;top:978.3px;width:17.5px;height:18.4px;"></div>
<svg style="left:1755px;top:978.3px" width="1" height="1"><path d="M3 3 L15 15" fill="none" stroke="#ccc" stroke-width="1"/><circle cx="9" cy="9" r="1.8" fill="#5ec8a0"/><circle cx="15" cy="15" r="1.3" fill="#5ec8a0"/></svg>
<div class="t" style="left:1815px;top:982px;font-size:11.7px;color:#e8e8e8">Align:</div>
<div class="a btn" style="left:1850px;top:978.3px;width:17.6px;height:18.4px;"></div>
<svg style="left:1850px;top:978.3px" width="1" height="1"><rect x="3" y="3" width="1" height="12" fill="#ddd"/><rect x="5.5" y="5" width="3" height="1.5" fill="#ddd"/><rect x="5.5" y="11" width="8" height="1.5" fill="#ddd"/><rect x="10" y="5" width="3" height="1.5" fill="#ddd"/></svg>
<div class="a btn" style="left:1867.6px;top:978.3px;width:17.6px;height:18.4px;"></div>
<svg style="left:1867.6px;top:978.3px" width="1" height="1"><rect x="8.5" y="2" width="1" height="14" fill="#ddd" /><rect x="4" y="5" width="10" height="1.5" fill="#ddd"/><rect x="4" y="11" width="10" height="1.5" fill="#ddd"/></svg>
<div class="a btn" style="left:1885.2px;top:978.3px;width:17.5px;height:18.4px;"></div>
<svg style="left:1885.2px;top:978.3px" width="1" height="1"><rect x="14" y="3" width="1" height="12" fill="#ddd"/><rect x="4" y="5" width="3" height="1.5" fill="#ddd"/><rect x="4" y="11" width="8" height="1.5" fill="#ddd"/><rect x="9" y="5" width="3" height="1.5" fill="#ddd"/></svg>
<div class="a" style="left:1914px;top:85px;width:6px;height:945px;background:#1d1d1d"></div><div class="a" style="left:494px;top:1003px;width:1420px;height:23px;background:#3b3b3b"></div>
<svg style="left:498px;top:1009px" width="3" height="12"><circle cx="1" cy="1" r="1" fill="#777"/><circle cx="1" cy="5.5" r="1" fill="#777"/><circle cx="1" cy="10" r="1" fill="#777"/></svg>
<div class="a btn" style="left:507px;top:1006px;width:18px;height:18px"></div>
<svg style="left:509px;top:1009px" width="15" height="14"><path d="M0.5 0.5 H12 V8.5 H11 L12 11.5 L8.5 8.5 H0.5Z" fill="#e0e0e0"/><rect x="2" y="2" width="1.5" height="1.2" fill="#333"/><rect x="4.5" y="2" width="6" height="1.2" fill="#333"/><rect x="2" y="4.2" width="1.5" height="1.2" fill="#333"/><rect x="4.5" y="4.2" width="6" height="1.2" fill="#333"/><rect x="2" y="6.4" width="1.5" height="1.2" fill="#333"/><rect x="4.5" y="6.4" width="6" height="1.2" fill="#333"/><path d="M12 13.5 L14.5 11 V13.5Z" fill="#5ec8a0"/></svg>
<div class="a" style="left:528px;top:1008px;width:18px;height:14px;background:#33c566;border-radius:2px"></div>
<div class="t" style="left:533px;top:1010px;font-size:11px;color:#1a1a1a">7</div>
<svg style="left:557px;top:1015px" width="1" height="1"><circle r="2.8" fill="#33c566"/></svg>
<div class="t" style="left:565px;top:1009.5px;font-size:11.4px;color:#eaeaea">Save reminder: 10 minutes since your last save.</div>
<div class="t" style="left:1360px;top:1009.5px;font-size:10.5px;font-style:italic;color:#e0e0e0">Click to see next message</div>
<div class="a" style="left:1488.2px;top:1005.8px;width:79.6px;height:18px;background:#d8bb6e;border-radius:2px"></div>
<div class="t" style="left:1493.7px;top:1009.5px;font-size:11.7px;color:#2a2a2a">Feedback</div>
<svg style="left:1551.8px;top:1008px" width="12" height="13"><rect x="1" y="1" width="9" height="11" fill="#f4f4f4"/><path d="M4 11 L10 4 L11.5 5.5 L5.5 12Z" fill="#f07030"/></svg>
<div class="a" style="left:1570.9px;top:1005.8px;width:108.7px;height:18px;background:#33c566;border-radius:2px"></div>
<div class="t" style="left:1576.4px;top:1009.5px;font-size:11.7px;color:#1a1a1a">Upgrade to Pro</div>
<svg style="left:1663.6px;top:1008px" width="12" height="13"><circle cx="3.5" cy="7" r="3" fill="#f5c020"/><circle cx="8.5" cy="7" r="3" fill="#f5c020"/></svg>
<div class="a" style="left:1683.2px;top:1005.8px;width:118.7px;height:18px;background:#b894f6;border-radius:2px"></div>
<div class="t" style="left:1688.7px;top:1009.5px;font-size:11.7px;color:#1a1a1a">Update Available</div>
<svg style="left:1785.9px;top:1008px" width="12" height="13"><circle cx="6" cy="7" r="5" fill="#f5c020"/><path d="M1 5 L11 9 M2 10 L9 2" stroke="#e040a0" stroke-width="1.2"/></svg>
<div class="a" style="left:1805.2px;top:1005.8px;width:105.8px;height:18px;background:#3aacf0;border-radius:2px"></div>
<div class="t" style="left:1810.7px;top:1009.5px;font-size:11.7px;color:#1a1a1a">Tips and Tricks</div>
<svg style="left:1895.0px;top:1008px" width="12" height="13"><path d="M2 11 L6 7 M10 1 C11 5 9 8 6 10 L3 8 C4 5 7 2 10 1Z" fill="#e0e0e0" stroke="#e04040" stroke-width="0.8"/></svg>
<div class="a" style="left:494px;top:1026px;width:1426px;height:4px;background:#1d1d1d"></div></body></html>
